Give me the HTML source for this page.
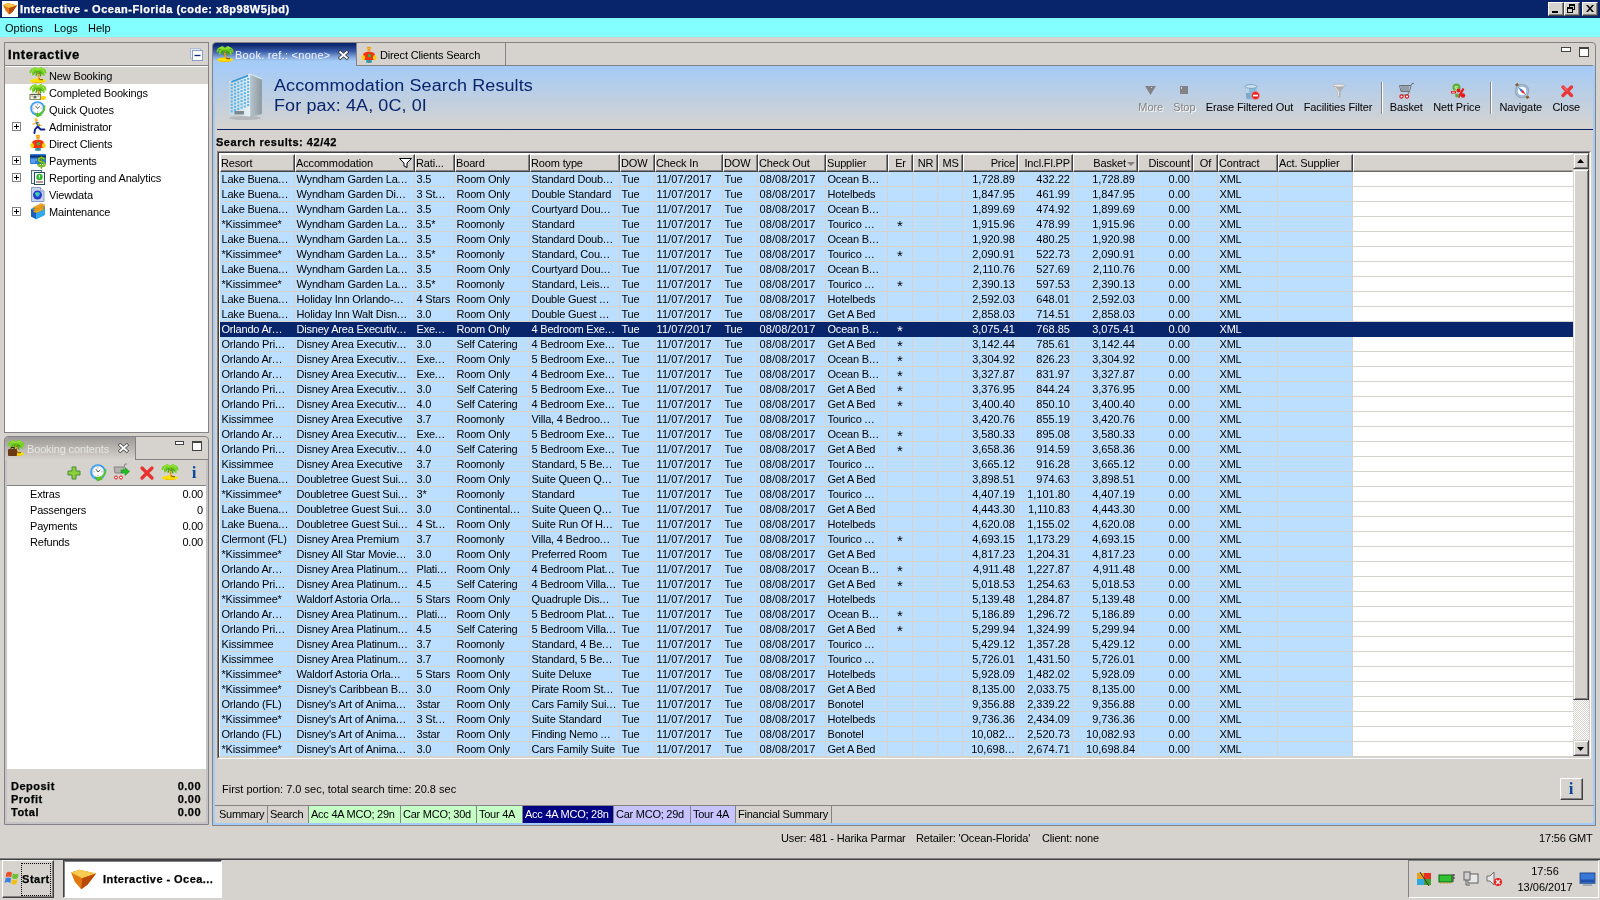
<!DOCTYPE html>
<html><head><meta charset="utf-8"><title>Interactive - Ocean-Florida</title>
<style>
*{box-sizing:border-box;margin:0;padding:0}
html,body{width:1600px;height:900px;overflow:hidden;background:#d6d3ce;font-family:"Liberation Sans",sans-serif;font-size:11px;color:#000;line-height:13px}
div,span,i,b{position:absolute;white-space:nowrap;font-style:normal}
svg{position:absolute;overflow:visible}
b{font-weight:bold}
#wrap{left:0;top:0;width:1600px;height:900px;will-change:transform}
/* title */
#title{left:0;top:0;width:1600px;height:18px;background:#08246b}
#title .cap{-webkit-text-stroke:.25px #fff;left:20px;top:3px;color:#fff;font-weight:bold;font-size:11px;line-height:13px;letter-spacing:0.52px}
.wbtn{top:2px;width:16px;height:14px;background:#d6d3ce;border:1px solid;border-color:#fff #424142 #424142 #fff;box-shadow:inset -1px -1px 0 #848284}
#menu{left:0;top:18px;width:1600px;height:19px;background:#84ffff}
#menu span{top:4px}
/* left top panel */
#nav{left:4px;top:42px;width:205px;height:391px;border:1px solid #848284;background:#fff}
#navhead{left:0;top:0;width:203px;height:23px;background:#d6d3ce;border-bottom:1px solid #848284}
#navhead b{-webkit-text-stroke:.3px #000;left:3px;top:3px;font-size:13px;line-height:17px;letter-spacing:0.62px}
.ti{left:0;width:203px;height:17px}
.ti span{left:44px;top:3px;letter-spacing:-0.15px}
.ti.on{background:#d6d3ce}
.plus{left:7px;top:4px;width:9px;height:9px;border:1px solid #848284;background:#fff}
.plus:before{content:"";position:absolute;left:1px;top:3px;width:5px;height:1px;background:#000}
.plus:after{content:"";position:absolute;left:3px;top:1px;width:1px;height:5px;background:#000}
/* booking contents */
#bc{left:4px;top:436px;width:205px;height:389px;border:1px solid #848284;border-radius:4px 4px 0 0;background:#d6d3ce}
#bctab{left:0;top:0;width:131px;height:23px;background:linear-gradient(#9c9a98,#b4b1ac 40%,#d6d3ce);border-right:1px solid #848284;border-radius:3px 0 0 0}
#bctab span{left:22px;top:6px;color:#e8e6e0;letter-spacing:-0.15px}
#bcin{left:0;top:23px;width:203px;height:364px;border:2px solid #c6c3c6;border-top:0}
#bcline{left:131px;top:22px;width:72px;height:1px;background:#848284}
#bclist{left:2px;top:48px;width:199px;height:284px;background:#fff;border-top:1px solid #848284}
#bclist span{top:0;letter-spacing:-0.2px}
.tot b{left:7px}
.tot i{right:7px;font-weight:bold}
/* main panel */
#main{left:212px;top:42px;width:1384px;height:784px;border:1px solid #848284;border-radius:4px 4px 0 0;background:#d6d3ce}
#mainin{left:0;top:22px;width:1382px;height:760px;border:2px solid #a5cbf7;border-top:0}
#tabline{left:144px;top:22px;width:1238px;height:1px;background:#848284}
#tab1{left:0;top:0;width:144px;height:24px;border-radius:3px 0 0 0;background:linear-gradient(#08246b,#0c2870 8%,#3a5ca8 35%,#86a8dc 60%,#a5cbf7 76%,#a5cbf7);border-right:1px solid #848284}
#tab1 span{left:22px;top:6px;color:#f0f4ff;letter-spacing:0.28px}
#tab2{left:144px;top:0;width:149px;height:23px;border-right:1px solid #848284}
#tab2 span{left:23px;top:6px;letter-spacing:-0.15px}
#hdr{left:2px;top:23px;width:1378px;height:63px;background:linear-gradient(#a5cbf7,#d6d3ce)}
#hdrline{left:4px;top:86px;width:1376px;height:1px;background:#08246b}
#hdr .t1{left:59px;top:9px;font-size:18px;line-height:20px;color:#08246b;letter-spacing:0.1px;transform:scaleY(.88);transform-origin:0 16.200px}
#hdr .t2{left:59px;top:29px;font-size:18px;line-height:20px;color:#08246b;letter-spacing:0.1px;transform:scaleY(.88);transform-origin:0 16.200px}
.tb{top:35px;height:13px;text-align:center;letter-spacing:-0.1px}
.tb.dis{color:#848284;text-shadow:1px 1px 0 #fff}
.sep{top:17px;width:2px;height:32px;border-left:1px solid #848284;border-right:1px solid #fff}
#sr{-webkit-text-stroke:.25px #000;left:3px;top:93px;font-weight:bold;font-size:11px;line-height:13px;letter-spacing:0.52px}
/* table */
#tblwrap{width:1374px;height:608px;border:1px solid;border-color:#848284 #fff #fff #848284}
#tblwrap2{width:1372px;height:606px;border:1px solid;border-color:#424142 #d6d3ce #d6d3ce #424142}
#tbl{left:6px;top:110px;width:1370px;height:603px;background:#fff;overflow:hidden}
#tcont{left:1px;top:1px;width:1353px;height:602px}
#thead{left:0;top:0;width:1353px;height:18px;background:#d6d3ce}
.th{top:0;height:18px;background:#d6d3ce;border:1px solid;border-color:#fff #424142 #424142 #fff;box-shadow:inset -1px -1px 0 #848284}
.th.fill{border-color:#fff #d6d3ce #6b6963 #fff;box-shadow:inset 0 -1px 0 #a5a29c}
.th span{top:2px;left:0px;letter-spacing:-0.15px}
.th.r span{left:auto;right:2px}
.th.c span{left:0;right:0;text-align:center}
#tbody{left:0;top:18px;width:1353px;height:585px;
 background:repeating-linear-gradient(to bottom,transparent 0,transparent 14px,#d6d3ce 14px,#d6d3ce 15px)}
.tr{left:0;width:1353px;height:15px}
.td{top:0;height:14px;line-height:15px;background:#bddfff;padding-left:1.500px;overflow:hidden;border-right:1px solid #d6d3ce;box-sizing:border-box}
.td u{text-decoration:none;letter-spacing:0.35px}
.td.l,.td.c{letter-spacing:-0.2px}
.td.d{letter-spacing:0.1px}
.td.er{text-align:center;padding-left:0;font-size:15px;line-height:17px}
.td.r{text-align:right;padding-right:2px;padding-left:0}
.td.c{text-align:center;padding-left:0}
.tr.sel{background:#08246b}
.tr.sel .td{background:#08246b;color:#fff;border-right-color:#08246b;height:15px}
.sortarr{right:2px;top:7px;width:0;height:0;border-left:4px solid transparent;border-right:4px solid transparent;border-top:4px solid #848284}
/* scrollbar */
#vs{left:1354px;top:0;width:16px;height:603px;background-image:conic-gradient(#fff 25%,#d6d3ce 0 50%,#fff 0 75%,#d6d3ce 0);background-size:2px 2px}
.sbtn{left:0;width:16px;height:16px;background:#d6d3ce;border:1px solid;border-color:#d6d3ce #424142 #424142 #d6d3ce;box-shadow:inset 1px 1px 0 #fff,inset -1px -1px 0 #848284}
/* bottom */
#fp{left:9px;top:740px}
#ibtn{left:1347px;top:735px;width:23px;height:22px;background:#d6d3ce;border:1px solid;border-color:#fff #424142 #424142 #fff;box-shadow:inset -1px -1px 0 #848284}
#ibtn b{left:0;width:20px;top:1px;text-align:center;font-family:"Liberation Serif",serif;font-size:17px;line-height:17px;color:#0a4a9a}
#btabs{left:2px;top:762px;width:1379px;height:19px;border-top:1px solid #848284}
.bt{top:0;height:17px;line-height:17px;padding-left:2px;border-right:1px solid #848284;letter-spacing:-0.25px}
#status span{top:832px;letter-spacing:-0.15px}
#tbline{left:0;top:858px;width:1600px;height:2px;border-top:1px solid #848284;border-bottom:1px solid #424142}

</style></head>
<body>
<div id="wrap">
<div id="title">
<svg style="left:2px;top:1px" width="16" height="16" viewBox="0 0 16 16"><rect width="16" height="16" fill="#fff"/><path d="M1 4l5-2 9 2.5-4.500 6.500-3.500 2.500-3.500-4z" fill="#e07a10"/><path d="M1 4l5-2 9 2.500-8 2.500z" fill="#f6c24a"/><path d="M7 7l8-2.500-4.500 6.500-3.500 2.500z" fill="#b84a08"/></svg>
<span class="cap">Interactive - Ocean-Florida (code: x8p98W5jbd)</span>
<div class="wbtn" style="left:1548px"><i style="left:3px;top:8px;width:6px;height:2px;background:#000"></i></div>
<div class="wbtn" style="left:1564px"><i style="left:4px;top:1px;width:6px;height:6px;border:1px solid #000;border-top-width:2px"></i><i style="left:2px;top:4px;width:6px;height:6px;border:1px solid #000;border-top-width:2px;background:#d6d3ce"></i></div>
<div class="wbtn" style="left:1582px"><svg style="left:3px;top:2px" width="8" height="7" viewBox="0 0 8 7"><path d="M0 0h2l2 2.500 2-2.500h2l-3 3.500 3 3.500h-2l-2-2.500-2 2.500h-2l3-3.500z" fill="#000"/></svg></div>
</div>
<div id="menu"><span style="left:5px">Options</span><span style="left:54px">Logs</span><span style="left:88px">Help</span></div>
<div id="nav">
<div id="navhead"><b>Interactive</b><svg style="left:185px;top:5px" width="14" height="14" viewBox="0 0 14 14"><rect x=".5" y=".5" width="10" height="10" fill="#e4ecf8" stroke="#b0bcd4"/><rect x="2.500" y="2.500" width="10" height="10" fill="#fff" stroke="#8a9cc0"/><path d="M4.500 7.500h6" stroke="#0a2a80" stroke-width="1.300"/></svg></div>
<div class="ti on" style="top:24px"><svg style="left:25px;top:0px" width="16" height="16" viewBox="0 0 16 16"><path d="M0 13.800c0-1.300 3.500-2.300 8-2.300s8 1 8 2.300-3.500 2.200-8 2.200-8-.9-8-2.200z" fill="#ffe000"/><path d="M1 14.500c2 1 5 1.500 7 1.500s5-.5 7-1.500c-2 .5-5 .7-7 .7s-5-.2-7-.7z" fill="#f0b800"/><path d="M7.200 4c0 3 .3 6 1.200 9h1.900c-1.200-3-1.700-6-1.500-9z" fill="#f4b010"/><path d="M8 6l1 .8M8.200 8.500l1 .8M8.700 11l1 .6" stroke="#b85a10" stroke-width="1"/><path d="M9.500 12.200h3.500v1h-3.500z" fill="#6a4210"/><g fill="none" stroke-linecap="round"><path d="M8 3.500Q6.500 5 6.200 8M8 3.500Q10 5 10.600 8.600M8 3.500Q11.500 4 12.300 6.800M8 3.500Q4.500 4 3.900 6.600" stroke="#48a814" stroke-width="1.700"/><path d="M8 3.500Q4.500 .2 1.200 3.200L.4 5.400M8 3.500Q4.500 2.500 2.800 5.200L2.900 7.700M8 3.500Q11.500 .2 14.800 3.200L15.600 5.600M8 3.500Q11.500 2.500 13.400 5.200L13.800 8.200M8 3.500Q7 1 4.800 .8M8 3.500Q9 1 11.200 .8" stroke="#74d21c" stroke-width="1.800"/><path d="M7 2.200Q5 1 3 2M9 2.200Q11 1 13 2" stroke="#a8f040" stroke-width=".9"/></g></svg><span>New Booking</span></div>
<div class="ti" style="top:41px"><svg style="left:25px;top:0px" width="16" height="16" viewBox="0 0 16 16"><path d="M10 13.800c0-1 1.500-1.800 3.500-1.800s2.500.8 2.500 1.800-1 2.200-3 2.200-3-1.200-3-2.200z" fill="#ffd000"/><path d="M7.200 4c0 2.500 .3 4.500 1 7h1.900c-1-2.500-1.500-4.500-1.300-7z" fill="#f4b010"/><path d="M8 6l1 .8M8.200 8.500l1 .8" stroke="#b85a10" stroke-width="1"/><g fill="none" stroke-linecap="round"><path d="M8 3.500Q6.500 5 6.200 8M8 3.500Q10 5 10.600 8.600M8 3.500Q11.500 4 12.300 6.800M8 3.500Q4.500 4 3.900 6.600" stroke="#48a814" stroke-width="1.700"/><path d="M8 3.500Q4.500 .2 1.200 3.200L.4 5.400M8 3.500Q4.500 2.500 2.800 5.200L2.900 7.700M8 3.500Q11.500 .2 14.800 3.200L15.600 5.600M8 3.500Q11.500 2.500 13.400 5.200L13.800 8.200M8 3.500Q7 1 4.800 .8M8 3.500Q9 1 11.200 .8" stroke="#74d21c" stroke-width="1.800"/><path d="M7 2.200Q5 1 3 2M9 2.200Q11 1 13 2" stroke="#a8f040" stroke-width=".9"/></g><path d="M0 10.500h10.500v5h-10.500z" fill="#f4f4e0" stroke="#8a8c68" stroke-width="1.200"/><path d="M.5 10.300h10.500" stroke="#5a5c40" stroke-width="1"/><circle cx="5" cy="13" r="1.600" fill="#6a6a5a"/><path d="M1.500 12h1.500M7.500 12h1.500" stroke="#7a7c60" stroke-width=".8"/></svg><span>Completed Bookings</span></div>
<div class="ti" style="top:58px"><svg style="left:25px;top:0px" width="16" height="16" viewBox="0 0 16 16"><circle cx="7.500" cy="7.500" r="7.300" fill="#2e9af4"/><circle cx="7.500" cy="7.500" r="6" fill="#6ec0ff"/><circle cx="7.500" cy="7.300" r="5.200" fill="#fff" stroke="#c8ccd4" stroke-width=".7"/><path d="M7.500 3.200v.9M7.500 10.600v.9M3.300 7.300h.9M10.800 7.300h.9" stroke="#666" stroke-width=".8"/><path d="M5.500 4.800l2 2.700 2.300-2" stroke="#444" stroke-width=".9" fill="none"/><path d="M15.200 4.500c.8 3.500-.8 7-4 8.300l.5 1.400-4.700 1.800-2-4.300 1.600.7c.5-.5 1.500-.3 2.800-.5 3-.7 4.800-3.600 4.500-7.400z" fill="#58c624"/><path d="M5 11.700l2 4.300 4.700-1.800" fill="none" stroke="#3c9c14" stroke-width=".5"/></svg><span>Quick Quotes</span></div>
<div class="ti" style="top:75px"><i class="plus"></i><svg style="left:25px;top:0px" width="16" height="16" viewBox="0 0 16 16"><circle cx="6.300" cy="2.200" r="1.600" fill="#f6c040"/><path d="M4.600 1.200l2.200-.7" stroke="#f0d020" stroke-width="1.300"/><path d="M5.300 3.800l3.200.3 1.800 3.600-2.500 1.800z" fill="#3c54b0"/><path d="M6.500 4.500l2 .5 1.200 2.800-1.500.8z" fill="#6aa838"/><path d="M8 5l1.300 2.500" stroke="#f6c040" stroke-width="1.200"/><path d="M5.500 5.500l-2.600.7M9.800 7l1.600.5" stroke="#f6b030" stroke-width="1.200" stroke-linecap="round"/><path d="M8.200 9.200l2.600 2.300h3.600M7.300 8.800l-2.300 2.700-.6 3.500" stroke="#14208c" stroke-width="1.900" fill="none" stroke-linecap="round" stroke-linejoin="round"/></svg><span>Administrator</span></div>
<div class="ti" style="top:92px"><svg style="left:25px;top:0px" width="16" height="16" viewBox="0 0 16 16"><circle cx="8" cy="2.600" r="2.100" fill="#f8c050"/><path d="M6 1.300c1-1.300 3-1.300 4 0" stroke="#f0a000" stroke-width="1.300" fill="none"/><path d="M7 2.800h2" stroke="#c05010" stroke-width=".6"/><path d="M2.500 6.500c2-2.500 9-2.500 11 0l1 3.500-1.500 3h-10l-1.500-3z" fill="#f03414"/><ellipse cx="2.200" cy="10.500" rx="1.900" ry="2.600" fill="#ffd010"/><ellipse cx="13.800" cy="10.500" rx="1.900" ry="2.600" fill="#ffd010"/><path d="M4 9l1.500 1.500v2.500h5v-2.500l1.500-1.500v-3h-8z" fill="#f03414"/><rect x="7" y="7.200" width="2.800" height="3" fill="#30b848"/><rect x="5.200" y="13" width="5.600" height="2.800" fill="#18a8b8"/><path d="M8 13v2.800" stroke="#f03414" stroke-width=".7"/></svg><span>Direct Clients</span></div>
<div class="ti" style="top:109px"><i class="plus"></i><svg style="left:25px;top:0px" width="16" height="16" viewBox="0 0 16 16"><rect x="0" y="2" width="16" height="10" rx="1" fill="#2a7ad8"/><rect x="0" y="3.500" width="16" height="2" fill="#0a2a70"/><path d="M1 8l6 0M1 10l4 0" stroke="#8cc0f8" stroke-width="1"/><text x="11.500" y="15" font-family="Liberation Sans" font-weight="bold" font-size="15" text-anchor="middle" fill="#9ad820" stroke="#4a8a08" stroke-width=".5">$</text></svg><span>Payments</span></div>
<div class="ti" style="top:126px"><i class="plus"></i><svg style="left:25px;top:0px" width="16" height="16" viewBox="0 0 16 16"><rect x="1.500" y="1.500" width="10" height="13" fill="#e8eef4" stroke="#4a6a80"/><rect x="4.500" y="3.500" width="10" height="12" fill="#fff" stroke="#2a4a60"/><circle cx="9.500" cy="8" r="3.200" fill="#2ab82a"/><path d="M9.500 6v2.500M9.500 9.800v.1" stroke="#fff" stroke-width="1.200"/><path d="M6 13h7" stroke="#603020" stroke-width="1"/></svg><span>Reporting and Analytics</span></div>
<div class="ti" style="top:143px"><svg style="left:25px;top:0px" width="16" height="16" viewBox="0 0 16 16"><path d="M1.500 1.500h9l3.500 3.500v10.500h-12.500z" fill="#c8d4f0" stroke="#8a9cc8"/><path d="M10.500 1.500v3.500h3.500" fill="#eef2fc" stroke="#8a9cc8"/><circle cx="7.500" cy="9" r="4.500" fill="#2a3ac8"/><path d="M5 7c1.500-1.500 3.500-1.500 5 0 0 2-1 3-2.500 4-1.500-1-2.500-2-2.500-4z" fill="#30c0d8"/><path d="M6 6.500c1 0 2 .5 2 1.500s-1 1.500-2 1z" fill="#50d870"/></svg><span>Viewdata</span></div>
<div class="ti" style="top:160px"><i class="plus"></i><svg style="left:25px;top:0px" width="16" height="16" viewBox="0 0 16 16"><path d="M1 6l9-4.500 5 2v8l-9 4.500-5-2.500z" fill="#2a90e0"/><path d="M1 6l5 2.500v7.500l-5-2.500z" fill="#1a60b8"/><path d="M3 4.500l8-4 4 1.500-8 4zM3 6.500l8-4 4 1.500-8 4zM3 8.500l8-4 4 1.500-8 4z" fill="#f4b020" stroke="#c07010" stroke-width=".4"/><path d="M6 10.500l9-4.500v6l-9 4.500z" fill="#30a8f0"/></svg><span>Maintenance</span></div>
</div>
<div id="bc">
<div id="bctab"><svg style="left:3px;top:3px" width="16" height="16" viewBox="0 0 16 16"><path d="M0 13.800c0-1.300 3.500-2.300 8-2.300s8 1 8 2.300-3.500 2.200-8 2.200-8-.9-8-2.200z" fill="#ffe000"/><path d="M1 14.500c2 1 5 1.500 7 1.500s5-.5 7-1.500c-2 .5-5 .7-7 .7s-5-.2-7-.7z" fill="#f0b800"/><path d="M7.200 4c0 3 .3 6 1.200 9h1.900c-1.200-3-1.700-6-1.500-9z" fill="#f4b010"/><path d="M8 6l1 .8M8.200 8.500l1 .8M8.700 11l1 .6" stroke="#b85a10" stroke-width="1"/><path d="M9.500 12.200h3.500v1h-3.500z" fill="#6a4210"/><g fill="none" stroke-linecap="round"><path d="M8 3.500Q6.500 5 6.200 8M8 3.500Q10 5 10.600 8.600M8 3.500Q11.500 4 12.300 6.800M8 3.500Q4.500 4 3.900 6.600" stroke="#48a814" stroke-width="1.700"/><path d="M8 3.500Q4.500 .2 1.200 3.200L.4 5.400M8 3.500Q4.500 2.500 2.800 5.200L2.900 7.700M8 3.500Q11.500 .2 14.800 3.200L15.600 5.600M8 3.500Q11.500 2.500 13.400 5.200L13.800 8.200M8 3.500Q7 1 4.800 .8M8 3.500Q9 1 11.200 .8" stroke="#74d21c" stroke-width="1.800"/><path d="M7 2.200Q5 1 3 2M9 2.200Q11 1 13 2" stroke="#a8f040" stroke-width=".9"/></g></svg><svg style="left:3px;top:9px" width="10" height="10" viewBox="0 0 10 10"><rect x="0" y="3" width="9" height="7" rx="1" fill="#6a3a18"/><path d="M3 3v-1.500h3v1.500" stroke="#3a2008" fill="none"/></svg><span>Booking contents</span><svg style="left:113px;top:6px" width="11" height="10" viewBox="0 0 11 10"><path d="M1 1l9 8M10 1l-9 8" stroke="#444" stroke-width="3.400"/><path d="M1.500 1.500l8 7M9.500 1.500l-8 7" stroke="#fff" stroke-width="1.800"/></svg></div>
<div id="bcin"></div><div id="bcline"></div>
<i style="left:170px;top:4px;width:9px;height:4px;border:1px solid #444;background:#fff"></i><i style="left:187px;top:4px;width:10px;height:10px;border:1px solid #444;border-top-width:2px;background:#fff"></i>
<svg style="left:62px;top:29px" width="14" height="14" viewBox="0 0 14 14"><path d="M5 1h4v4h4v4h-4v4h-4v-4h-4v-4h4z" fill="#8ccf3a" stroke="#4a8a3a" stroke-width="1"/></svg><svg style="left:85px;top:27px" width="17" height="17" viewBox="0 0 16 16"><circle cx="7.500" cy="7.500" r="7.300" fill="#2e9af4"/><circle cx="7.500" cy="7.500" r="6" fill="#6ec0ff"/><circle cx="7.500" cy="7.300" r="5.200" fill="#fff" stroke="#c8ccd4" stroke-width=".7"/><path d="M7.500 3.200v.9M7.500 10.600v.9M3.300 7.300h.9M10.800 7.300h.9" stroke="#666" stroke-width=".8"/><path d="M5.500 4.800l2 2.700 2.300-2" stroke="#444" stroke-width=".9" fill="none"/><path d="M15.200 4.500c.8 3.500-.8 7-4 8.300l.5 1.400-4.700 1.800-2-4.300 1.600.7c.5-.5 1.500-.3 2.800-.5 3-.7 4.800-3.600 4.500-7.400z" fill="#58c624"/><path d="M5 11.700l2 4.300 4.700-1.800" fill="none" stroke="#3c9c14" stroke-width=".5"/></svg><svg style="left:108px;top:26px" width="18" height="18" viewBox="0 0 18 18"><path d="M1 4h10l-1 6h-8zM11 4l1-3h2" fill="none" stroke="#848284" stroke-width="1"/><path d="M3 4v6M5 4v6M7 4v6M9 4v6" stroke="#848284" stroke-width=".8"/><circle cx="3" cy="14.500" r="1.500" fill="#fff" stroke="#e01010"/><circle cx="8" cy="14.500" r="1.500" fill="#fff" stroke="#e01010"/><path d="M8 7h4v-2.500l4.500 4-4.500 4v-2.500h-4z" fill="#20c020" stroke="#108010" stroke-width=".5"/></svg><svg style="left:135px;top:29px" width="14" height="14" viewBox="0 0 14 14"><path d="M2 2l10 10M12 2l-10 10" stroke="#e83030" stroke-width="3.200" stroke-linecap="round"/></svg><svg style="left:157px;top:27px" width="16" height="16" viewBox="0 0 16 16"><path d="M0 13.800c0-1.300 3.500-2.300 8-2.300s8 1 8 2.300-3.500 2.200-8 2.200-8-.9-8-2.200z" fill="#ffe000"/><path d="M1 14.500c2 1 5 1.500 7 1.500s5-.5 7-1.500c-2 .5-5 .7-7 .7s-5-.2-7-.7z" fill="#f0b800"/><path d="M7.200 4c0 3 .3 6 1.200 9h1.900c-1.200-3-1.700-6-1.500-9z" fill="#f4b010"/><path d="M8 6l1 .8M8.200 8.500l1 .8M8.700 11l1 .6" stroke="#b85a10" stroke-width="1"/><path d="M9.500 12.200h3.500v1h-3.500z" fill="#6a4210"/><g fill="none" stroke-linecap="round"><path d="M8 3.500Q6.500 5 6.200 8M8 3.500Q10 5 10.600 8.600M8 3.500Q11.500 4 12.300 6.800M8 3.500Q4.500 4 3.900 6.600" stroke="#48a814" stroke-width="1.700"/><path d="M8 3.500Q4.500 .2 1.200 3.200L.4 5.400M8 3.500Q4.500 2.500 2.800 5.200L2.900 7.700M8 3.500Q11.500 .2 14.800 3.200L15.600 5.600M8 3.500Q11.500 2.500 13.400 5.200L13.800 8.200M8 3.500Q7 1 4.800 .8M8 3.500Q9 1 11.200 .8" stroke="#74d21c" stroke-width="1.800"/><path d="M7 2.200Q5 1 3 2M9 2.200Q11 1 13 2" stroke="#a8f040" stroke-width=".9"/></g></svg><b style="left:184px;top:26px;width:10px;text-align:center;font-family:'Liberation Serif',serif;font-size:17px;line-height:19px;color:#0a4aa0">i</b>
<div id="bclist"><span style="left:23px;top:2px">Extras</span><span style="right:3px;top:2px">0.00</span><span style="left:23px;top:18px">Passengers</span><span style="right:3px;top:18px">0</span><span style="left:23px;top:34px">Payments</span><span style="right:3px;top:34px">0.00</span><span style="left:23px;top:50px">Refunds</span><span style="right:3px;top:50px">0.00</span></div>
<b style="left:6px;top:343px;font-size:11px;letter-spacing:.5px;-webkit-text-stroke:.25px #000">Deposit</b><b style="right:7px;top:343px;font-size:11px;letter-spacing:.45px;-webkit-text-stroke:.25px #000">0.00</b><b style="left:6px;top:356px;font-size:11px;letter-spacing:.5px;-webkit-text-stroke:.25px #000">Profit</b><b style="right:7px;top:356px;font-size:11px;letter-spacing:.45px;-webkit-text-stroke:.25px #000">0.00</b><b style="left:6px;top:369px;font-size:11px;letter-spacing:.5px;-webkit-text-stroke:.25px #000">Total</b><b style="right:7px;top:369px;font-size:11px;letter-spacing:.45px;-webkit-text-stroke:.25px #000">0.00</b>
</div>
<div id="main">
<div id="tab1"><svg style="left:4px;top:3px" width="16" height="16" viewBox="0 0 16 16"><path d="M0 13.800c0-1.300 3.500-2.300 8-2.300s8 1 8 2.300-3.500 2.200-8 2.200-8-.9-8-2.200z" fill="#ffe000"/><path d="M1 14.500c2 1 5 1.500 7 1.500s5-.5 7-1.500c-2 .5-5 .7-7 .7s-5-.2-7-.7z" fill="#f0b800"/><path d="M7.200 4c0 3 .3 6 1.200 9h1.900c-1.200-3-1.700-6-1.500-9z" fill="#f4b010"/><path d="M8 6l1 .8M8.200 8.500l1 .8M8.700 11l1 .6" stroke="#b85a10" stroke-width="1"/><path d="M9.500 12.200h3.500v1h-3.500z" fill="#6a4210"/><g fill="none" stroke-linecap="round"><path d="M8 3.500Q6.500 5 6.200 8M8 3.500Q10 5 10.600 8.600M8 3.500Q11.500 4 12.300 6.800M8 3.500Q4.500 4 3.900 6.600" stroke="#48a814" stroke-width="1.700"/><path d="M8 3.500Q4.500 .2 1.200 3.200L.4 5.400M8 3.500Q4.500 2.500 2.800 5.200L2.900 7.700M8 3.500Q11.500 .2 14.800 3.200L15.600 5.600M8 3.500Q11.500 2.500 13.400 5.200L13.800 8.200M8 3.500Q7 1 4.800 .8M8 3.500Q9 1 11.200 .8" stroke="#74d21c" stroke-width="1.800"/><path d="M7 2.200Q5 1 3 2M9 2.200Q11 1 13 2" stroke="#a8f040" stroke-width=".9"/></g></svg><span>Book. ref.: &lt;none&gt;</span><svg style="left:125px;top:7px" width="11" height="10" viewBox="0 0 11 10"><path d="M1 1l9 8M10 1l-9 8" stroke="#333" stroke-width="3.400"/><path d="M1.500 1.500l8 7M9.500 1.500l-8 7" stroke="#fff" stroke-width="1.800"/></svg></div>
<div id="tab2"><svg style="left:4px;top:4px" width="16" height="16" viewBox="0 0 16 16"><circle cx="8" cy="2.600" r="2.100" fill="#f8c050"/><path d="M6 1.300c1-1.300 3-1.300 4 0" stroke="#f0a000" stroke-width="1.300" fill="none"/><path d="M7 2.800h2" stroke="#c05010" stroke-width=".6"/><path d="M2.500 6.500c2-2.500 9-2.500 11 0l1 3.500-1.500 3h-10l-1.500-3z" fill="#f03414"/><ellipse cx="2.200" cy="10.500" rx="1.900" ry="2.600" fill="#ffd010"/><ellipse cx="13.800" cy="10.500" rx="1.900" ry="2.600" fill="#ffd010"/><path d="M4 9l1.500 1.500v2.500h5v-2.500l1.500-1.500v-3h-8z" fill="#f03414"/><rect x="7" y="7.200" width="2.800" height="3" fill="#30b848"/><rect x="5.200" y="13" width="5.600" height="2.800" fill="#18a8b8"/><path d="M8 13v2.800" stroke="#f03414" stroke-width=".7"/></svg><span>Direct Clients Search</span></div>
<div id="tabline"></div>
<i style="left:1348px;top:4px;width:10px;height:5px;border:1px solid #444;background:#fff"></i><i style="left:1366px;top:4px;width:10px;height:10px;border:1px solid #444;border-top-width:2px;background:#fff"></i>
<div id="mainin"></div>
<div id="hdr">
<svg preserveAspectRatio="none" style="left:12px;top:7px" width="37" height="47" viewBox="0 0 35 47"><defs><linearGradient id="bg1" x1="0" x2="1"><stop offset="0" stop-color="#c8d8e4"/><stop offset="1" stop-color="#e8f0f4"/></linearGradient><linearGradient id="bg2" x1="0" x2="1"><stop offset="0" stop-color="#b8c4cc"/><stop offset="1" stop-color="#8c989e"/></linearGradient></defs><path d="M2 9l20-8v43l-20-3z" fill="url(#bg1)"/><path d="M22 1l11 5v35l-11 3z" fill="url(#bg2)"/><path d="M2 9l20-8 11 5" fill="none" stroke="#dfe8ee" stroke-width="1"/><rect x="3.5" y="11.0" width="2" height="2" fill="#5ab4e8"/><rect x="6.6" y="9.8" width="2" height="2" fill="#5ab4e8"/><rect x="9.7" y="8.5" width="2" height="2" fill="#5ab4e8"/><rect x="12.8" y="7.2" width="2" height="2" fill="#5ab4e8"/><rect x="15.9" y="6.0" width="2" height="2" fill="#5ab4e8"/><rect x="19.0" y="4.8" width="2" height="2" fill="#5ab4e8"/><rect x="3.5" y="14.3" width="2" height="2" fill="#5ab4e8"/><rect x="6.6" y="13.1" width="2" height="2" fill="#5ab4e8"/><rect x="9.7" y="11.8" width="2" height="2" fill="#5ab4e8"/><rect x="12.8" y="10.6" width="2" height="2" fill="#5ab4e8"/><rect x="15.9" y="9.3" width="2" height="2" fill="#5ab4e8"/><rect x="19.0" y="8.1" width="2" height="2" fill="#5ab4e8"/><rect x="3.5" y="17.6" width="2" height="2" fill="#5ab4e8"/><rect x="6.6" y="16.4" width="2" height="2" fill="#5ab4e8"/><rect x="9.7" y="15.1" width="2" height="2" fill="#5ab4e8"/><rect x="12.8" y="13.8" width="2" height="2" fill="#5ab4e8"/><rect x="15.9" y="12.6" width="2" height="2" fill="#5ab4e8"/><rect x="19.0" y="11.3" width="2" height="2" fill="#5ab4e8"/><rect x="3.5" y="20.9" width="2" height="2" fill="#5ab4e8"/><rect x="6.6" y="19.6" width="2" height="2" fill="#5ab4e8"/><rect x="9.7" y="18.4" width="2" height="2" fill="#5ab4e8"/><rect x="12.8" y="17.1" width="2" height="2" fill="#5ab4e8"/><rect x="15.9" y="15.9" width="2" height="2" fill="#5ab4e8"/><rect x="19.0" y="14.6" width="2" height="2" fill="#5ab4e8"/><rect x="3.5" y="24.2" width="2" height="2" fill="#5ab4e8"/><rect x="6.6" y="22.9" width="2" height="2" fill="#5ab4e8"/><rect x="9.7" y="21.7" width="2" height="2" fill="#5ab4e8"/><rect x="12.8" y="20.4" width="2" height="2" fill="#5ab4e8"/><rect x="15.9" y="19.2" width="2" height="2" fill="#5ab4e8"/><rect x="19.0" y="17.9" width="2" height="2" fill="#5ab4e8"/><rect x="3.5" y="27.5" width="2" height="2" fill="#5ab4e8"/><rect x="6.6" y="26.2" width="2" height="2" fill="#5ab4e8"/><rect x="9.7" y="25.0" width="2" height="2" fill="#5ab4e8"/><rect x="12.8" y="23.8" width="2" height="2" fill="#5ab4e8"/><rect x="15.9" y="22.5" width="2" height="2" fill="#5ab4e8"/><rect x="19.0" y="21.2" width="2" height="2" fill="#5ab4e8"/><rect x="3.5" y="30.8" width="2" height="2" fill="#5ab4e8"/><rect x="6.6" y="29.5" width="2" height="2" fill="#5ab4e8"/><rect x="9.7" y="28.3" width="2" height="2" fill="#5ab4e8"/><rect x="12.8" y="27.0" width="2" height="2" fill="#5ab4e8"/><rect x="15.9" y="25.8" width="2" height="2" fill="#5ab4e8"/><rect x="19.0" y="24.5" width="2" height="2" fill="#5ab4e8"/><rect x="3.5" y="34.1" width="2" height="2" fill="#5ab4e8"/><rect x="6.6" y="32.8" width="2" height="2" fill="#5ab4e8"/><rect x="9.7" y="31.6" width="2" height="2" fill="#5ab4e8"/><rect x="12.8" y="30.3" width="2" height="2" fill="#5ab4e8"/><rect x="15.9" y="29.1" width="2" height="2" fill="#5ab4e8"/><rect x="19.0" y="27.8" width="2" height="2" fill="#5ab4e8"/><rect x="3.5" y="37.4" width="2" height="2" fill="#5ab4e8"/><rect x="6.6" y="36.1" width="2" height="2" fill="#5ab4e8"/><rect x="9.7" y="34.9" width="2" height="2" fill="#5ab4e8"/><rect x="12.8" y="33.6" width="2" height="2" fill="#5ab4e8"/><rect x="15.9" y="32.4" width="2" height="2" fill="#5ab4e8"/><rect x="19.0" y="31.1" width="2" height="2" fill="#5ab4e8"/><path d="M4 8l16-6.500v2l-16 6.500z" fill="#3a9ad8"/><rect x="7" y="38" width="9" height="3.500" fill="#7a8890"/><ellipse cx="17" cy="45" rx="15" ry="2" fill="#000" opacity=".12"/></svg><span class="t1">Accommodation Search Results</span><span class="t2">For pax: 4A, 0C, 0I</span>
</div>
<div id="hdrline"></div>
<span class="tb dis" style="left:877.7px;width:120px;top:58px">More</span><span class="tb dis" style="left:911.3px;width:120px;top:58px">Stop</span><span class="tb" style="left:976.5px;width:120px;top:58px">Erase Filtered Out</span><span class="tb" style="left:1065px;width:120px;top:58px">Facilities Filter</span><span class="tb" style="left:1133.3px;width:120px;top:58px">Basket</span><span class="tb" style="left:1183.8px;width:120px;top:58px">Nett Price</span><span class="tb" style="left:1247.8px;width:120px;top:58px">Navigate</span><span class="tb" style="left:1293.3px;width:120px;top:58px">Close</span>
<svg style="left:932px;top:43px" width="11" height="9" viewBox="0 0 11 9"><path d="M0 0h11l-5.500 9z" fill="#848284"/><rect x="6" y="1" width="1" height="1" fill="#d6d3ce"/></svg><svg style="left:967px;top:43px" width="8" height="8" viewBox="0 0 8 8"><rect width="8" height="8" fill="#848284"/><rect x="1" y="1" width="1" height="2" fill="#d6d3ce"/></svg><svg style="left:1031px;top:41px" width="16" height="16" viewBox="0 0 16 16"><path d="M1 2.500l1.500 12c2 1.200 7 1.200 9 0l1.500-12z" fill="#8ab8d8"/><path d="M1 2.500l1 8h3v-8z" fill="#b8d4e8"/><ellipse cx="7" cy="2.500" rx="6" ry="1.800" fill="#d0e4f0" stroke="#6a98b8" stroke-width=".8"/><path d="M1.800 9h4v5.500h-3.300z" fill="#7aa8c8"/><circle cx="11.500" cy="11.500" r="4" fill="#e82020" stroke="#f8a0a0" stroke-width=".6"/><rect x="9" y="10.700" width="5" height="1.700" fill="#fff"/></svg><svg style="left:1120px;top:41px" width="12" height="14" viewBox="0 0 12 14"><path d="M0 1.500c2-1.500 10-1.500 12 0l-4.500 6v5l-1.500 1.500-1.500-1.500v-5z" fill="#b0b0b0"/><ellipse cx="6" cy="1.500" rx="6" ry="1.400" fill="#e8e8e8" stroke="#a0a0a0" stroke-width=".5"/><path d="M2 3l3.500 4.500v5" stroke="#e8e8e8" stroke-width="1" fill="none"/></svg><i class="sep" style="left:1168px;top:39px"></i><i class="sep" style="left:1277px;top:39px"></i>
<svg style="left:1186px;top:40px" width="16" height="16" viewBox="0 0 16 16"><path d="M.5 2.500h11.500l-1.500 6h-8.500zM12 2.500l1-2h2" fill="none" stroke="#707070" stroke-width="1"/><path d="M3 2.500v6M5 2.500v6M7 2.500v6M9 2.500v6" stroke="#707070" stroke-width="1"/><path d="M10.500 8.500l-2 3.500h-6" fill="none" stroke="#707070" stroke-width="1"/><circle cx="2.500" cy="13.500" r="1.600" fill="#fff" stroke="#e01010" stroke-width="1.100"/><circle cx="8" cy="13.500" r="1.600" fill="#fff" stroke="#e01010" stroke-width="1.100"/></svg><svg style="left:1237px;top:40px" width="16" height="16" viewBox="0 0 16 16"><circle cx="6.500" cy="4.500" r="4" fill="#58b038"/><text x="6.500" y="7.500" font-size="8" font-weight="bold" text-anchor="middle" fill="#c8f0a0" font-family="Liberation Sans">$</text><path d="M1 8h5v2.500h-5z" fill="#e81818"/><path d="M2 9.200h3" stroke="#fff" stroke-width=".8"/><circle cx="8.500" cy="7.500" r="2" fill="#e81818"/><circle cx="13" cy="12.500" r="2.200" fill="#e81818"/><path d="M13.500 5.500l-5 9" stroke="#e81818" stroke-width="2.200"/><circle cx="7" cy="12.500" r="2" fill="#58b038"/></svg><svg style="left:1301px;top:39.5px" width="16" height="16" viewBox="0 0 16 16"><circle cx="8" cy="8" r="6.500" fill="#e8f0f8" stroke="#9aa8b8" stroke-width="1.600"/><circle cx="8" cy="8" r="5" fill="#fff" stroke="#4a90d8" stroke-width=".8"/><path d="M4.500 4.500l2.500 4.500 2-2z" fill="#2a6ad0"/><path d="M11.500 11.500l-2.500-4.500-2 2z" fill="#e02020"/><path d="M1 1.500l2.500-1.500 1.500 2-2.500 1.500zM11.500 14l2.500-1.500 1.500 2-2.500 1.500z" fill="#8a5a2a"/></svg><svg style="left:1348px;top:42px" width="13" height="13" viewBox="0 0 13 13"><path d="M2 2l8.500 8.500M10.500 2l-8.500 8.500" stroke="#e83838" stroke-width="3.400" stroke-linecap="round"/><path d="M2.500 2l3.500 3.500" stroke="#f88" stroke-width="1" stroke-linecap="round"/></svg>
<span id="sr">Search results: 42/42</span>
<div id="tblwrap" style="left:4px;top:108px"></div><div id="tblwrap2" style="left:5px;top:109px"></div>
<div id="tbl">
<div id="tcont">
<div id="thead">
<div class="th l" style="left:0px;width:75px"><span>Resort</span></div>
<div class="th l" style="left:75px;width:120px"><span>Accommodation</span><svg style="right:2px;top:3px" width="13" height="10" viewBox="0 0 13 10"><path d="M0.5 0.500h12l-4.500 4.500v4.500l-3-1.500v-3z" fill="#fff" stroke="#000" stroke-width="1"/></svg></div>
<div class="th l" style="left:195px;width:40px"><span>Rati...</span></div>
<div class="th l" style="left:235px;width:75px"><span>Board</span></div>
<div class="th l" style="left:310px;width:90px"><span>Room type</span></div>
<div class="th l" style="left:400px;width:35px"><span>DOW</span></div>
<div class="th l" style="left:435px;width:68px"><span>Check In</span></div>
<div class="th l" style="left:503px;width:35px"><span>DOW</span></div>
<div class="th l" style="left:538px;width:68px"><span>Check Out</span></div>
<div class="th l" style="left:606px;width:62px"><span>Supplier</span></div>
<div class="th c" style="left:668px;width:25px"><span>Er</span></div>
<div class="th c" style="left:693px;width:25px"><span>NR</span></div>
<div class="th c" style="left:718px;width:25px"><span>MS</span></div>
<div class="th r" style="left:743px;width:55px"><span>Price</span></div>
<div class="th r" style="left:798px;width:55px"><span>Incl.Fl.PP</span></div>
<div class="th r" style="left:853px;width:65px"><span style="right:11px">Basket</span><i class="sortarr"></i></div>
<div class="th r" style="left:918px;width:55px"><span>Discount</span></div>
<div class="th c" style="left:973px;width:25px"><span>Of</span></div>
<div class="th l" style="left:998px;width:60px"><span>Contract</span></div>
<div class="th l" style="left:1058px;width:75px"><span>Act. Supplier</span></div>
<div class="th fill" style="left:1133px;width:220px"></div>
</div>
<div id="tbody">
<div class="tr" style="top:0px"><div class="td l" style="left:0px;width:75px">Lake Buena<u>...</u></div><div class="td l" style="left:75px;width:120px">Wyndham Garden La<u>...</u></div><div class="td l" style="left:195px;width:40px">3.5</div><div class="td l" style="left:235px;width:75px">Room Only</div><div class="td l" style="left:310px;width:90px">Standard Doub<u>...</u></div><div class="td l" style="left:400px;width:35px">Tue</div><div class="td d" style="left:435px;width:68px">11/07/2017</div><div class="td l" style="left:503px;width:35px">Tue</div><div class="td d" style="left:538px;width:68px">08/08/2017</div><div class="td l" style="left:606px;width:62px">Ocean B<u>...</u></div><div class="td er" style="left:668px;width:25px"></div><div class="td c" style="left:693px;width:25px"></div><div class="td c" style="left:718px;width:25px"></div><div class="td r" style="left:743px;width:55px">1,728.89</div><div class="td r" style="left:798px;width:55px">432.22</div><div class="td r" style="left:853px;width:65px">1,728.89</div><div class="td r" style="left:918px;width:55px">0.00</div><div class="td c" style="left:973px;width:25px"></div><div class="td l" style="left:998px;width:60px">XML</div><div class="td l" style="left:1058px;width:75px"></div></div>
<div class="tr" style="top:15px"><div class="td l" style="left:0px;width:75px">Lake Buena<u>...</u></div><div class="td l" style="left:75px;width:120px">Wyndham Garden Di<u>...</u></div><div class="td l" style="left:195px;width:40px">3 St<u>...</u></div><div class="td l" style="left:235px;width:75px">Room Only</div><div class="td l" style="left:310px;width:90px">Double Standard</div><div class="td l" style="left:400px;width:35px">Tue</div><div class="td d" style="left:435px;width:68px">11/07/2017</div><div class="td l" style="left:503px;width:35px">Tue</div><div class="td d" style="left:538px;width:68px">08/08/2017</div><div class="td l" style="left:606px;width:62px">Hotelbeds</div><div class="td er" style="left:668px;width:25px"></div><div class="td c" style="left:693px;width:25px"></div><div class="td c" style="left:718px;width:25px"></div><div class="td r" style="left:743px;width:55px">1,847.95</div><div class="td r" style="left:798px;width:55px">461.99</div><div class="td r" style="left:853px;width:65px">1,847.95</div><div class="td r" style="left:918px;width:55px">0.00</div><div class="td c" style="left:973px;width:25px"></div><div class="td l" style="left:998px;width:60px">XML</div><div class="td l" style="left:1058px;width:75px"></div></div>
<div class="tr" style="top:30px"><div class="td l" style="left:0px;width:75px">Lake Buena<u>...</u></div><div class="td l" style="left:75px;width:120px">Wyndham Garden La<u>...</u></div><div class="td l" style="left:195px;width:40px">3.5</div><div class="td l" style="left:235px;width:75px">Room Only</div><div class="td l" style="left:310px;width:90px">Courtyard Dou<u>...</u></div><div class="td l" style="left:400px;width:35px">Tue</div><div class="td d" style="left:435px;width:68px">11/07/2017</div><div class="td l" style="left:503px;width:35px">Tue</div><div class="td d" style="left:538px;width:68px">08/08/2017</div><div class="td l" style="left:606px;width:62px">Ocean B<u>...</u></div><div class="td er" style="left:668px;width:25px"></div><div class="td c" style="left:693px;width:25px"></div><div class="td c" style="left:718px;width:25px"></div><div class="td r" style="left:743px;width:55px">1,899.69</div><div class="td r" style="left:798px;width:55px">474.92</div><div class="td r" style="left:853px;width:65px">1,899.69</div><div class="td r" style="left:918px;width:55px">0.00</div><div class="td c" style="left:973px;width:25px"></div><div class="td l" style="left:998px;width:60px">XML</div><div class="td l" style="left:1058px;width:75px"></div></div>
<div class="tr" style="top:45px"><div class="td l" style="left:0px;width:75px">*Kissimmee*</div><div class="td l" style="left:75px;width:120px">Wyndham Garden La<u>...</u></div><div class="td l" style="left:195px;width:40px">3.5*</div><div class="td l" style="left:235px;width:75px">Roomonly</div><div class="td l" style="left:310px;width:90px">Standard</div><div class="td l" style="left:400px;width:35px">Tue</div><div class="td d" style="left:435px;width:68px">11/07/2017</div><div class="td l" style="left:503px;width:35px">Tue</div><div class="td d" style="left:538px;width:68px">08/08/2017</div><div class="td l" style="left:606px;width:62px">Tourico <u>...</u></div><div class="td er" style="left:668px;width:25px">*</div><div class="td c" style="left:693px;width:25px"></div><div class="td c" style="left:718px;width:25px"></div><div class="td r" style="left:743px;width:55px">1,915.96</div><div class="td r" style="left:798px;width:55px">478.99</div><div class="td r" style="left:853px;width:65px">1,915.96</div><div class="td r" style="left:918px;width:55px">0.00</div><div class="td c" style="left:973px;width:25px"></div><div class="td l" style="left:998px;width:60px">XML</div><div class="td l" style="left:1058px;width:75px"></div></div>
<div class="tr" style="top:60px"><div class="td l" style="left:0px;width:75px">Lake Buena<u>...</u></div><div class="td l" style="left:75px;width:120px">Wyndham Garden La<u>...</u></div><div class="td l" style="left:195px;width:40px">3.5</div><div class="td l" style="left:235px;width:75px">Room Only</div><div class="td l" style="left:310px;width:90px">Standard Doub<u>...</u></div><div class="td l" style="left:400px;width:35px">Tue</div><div class="td d" style="left:435px;width:68px">11/07/2017</div><div class="td l" style="left:503px;width:35px">Tue</div><div class="td d" style="left:538px;width:68px">08/08/2017</div><div class="td l" style="left:606px;width:62px">Ocean B<u>...</u></div><div class="td er" style="left:668px;width:25px"></div><div class="td c" style="left:693px;width:25px"></div><div class="td c" style="left:718px;width:25px"></div><div class="td r" style="left:743px;width:55px">1,920.98</div><div class="td r" style="left:798px;width:55px">480.25</div><div class="td r" style="left:853px;width:65px">1,920.98</div><div class="td r" style="left:918px;width:55px">0.00</div><div class="td c" style="left:973px;width:25px"></div><div class="td l" style="left:998px;width:60px">XML</div><div class="td l" style="left:1058px;width:75px"></div></div>
<div class="tr" style="top:75px"><div class="td l" style="left:0px;width:75px">*Kissimmee*</div><div class="td l" style="left:75px;width:120px">Wyndham Garden La<u>...</u></div><div class="td l" style="left:195px;width:40px">3.5*</div><div class="td l" style="left:235px;width:75px">Roomonly</div><div class="td l" style="left:310px;width:90px">Standard, Cou<u>...</u></div><div class="td l" style="left:400px;width:35px">Tue</div><div class="td d" style="left:435px;width:68px">11/07/2017</div><div class="td l" style="left:503px;width:35px">Tue</div><div class="td d" style="left:538px;width:68px">08/08/2017</div><div class="td l" style="left:606px;width:62px">Tourico <u>...</u></div><div class="td er" style="left:668px;width:25px">*</div><div class="td c" style="left:693px;width:25px"></div><div class="td c" style="left:718px;width:25px"></div><div class="td r" style="left:743px;width:55px">2,090.91</div><div class="td r" style="left:798px;width:55px">522.73</div><div class="td r" style="left:853px;width:65px">2,090.91</div><div class="td r" style="left:918px;width:55px">0.00</div><div class="td c" style="left:973px;width:25px"></div><div class="td l" style="left:998px;width:60px">XML</div><div class="td l" style="left:1058px;width:75px"></div></div>
<div class="tr" style="top:90px"><div class="td l" style="left:0px;width:75px">Lake Buena<u>...</u></div><div class="td l" style="left:75px;width:120px">Wyndham Garden La<u>...</u></div><div class="td l" style="left:195px;width:40px">3.5</div><div class="td l" style="left:235px;width:75px">Room Only</div><div class="td l" style="left:310px;width:90px">Courtyard Dou<u>...</u></div><div class="td l" style="left:400px;width:35px">Tue</div><div class="td d" style="left:435px;width:68px">11/07/2017</div><div class="td l" style="left:503px;width:35px">Tue</div><div class="td d" style="left:538px;width:68px">08/08/2017</div><div class="td l" style="left:606px;width:62px">Ocean B<u>...</u></div><div class="td er" style="left:668px;width:25px"></div><div class="td c" style="left:693px;width:25px"></div><div class="td c" style="left:718px;width:25px"></div><div class="td r" style="left:743px;width:55px">2,110.76</div><div class="td r" style="left:798px;width:55px">527.69</div><div class="td r" style="left:853px;width:65px">2,110.76</div><div class="td r" style="left:918px;width:55px">0.00</div><div class="td c" style="left:973px;width:25px"></div><div class="td l" style="left:998px;width:60px">XML</div><div class="td l" style="left:1058px;width:75px"></div></div>
<div class="tr" style="top:105px"><div class="td l" style="left:0px;width:75px">*Kissimmee*</div><div class="td l" style="left:75px;width:120px">Wyndham Garden La<u>...</u></div><div class="td l" style="left:195px;width:40px">3.5*</div><div class="td l" style="left:235px;width:75px">Roomonly</div><div class="td l" style="left:310px;width:90px">Standard, Leis<u>...</u></div><div class="td l" style="left:400px;width:35px">Tue</div><div class="td d" style="left:435px;width:68px">11/07/2017</div><div class="td l" style="left:503px;width:35px">Tue</div><div class="td d" style="left:538px;width:68px">08/08/2017</div><div class="td l" style="left:606px;width:62px">Tourico <u>...</u></div><div class="td er" style="left:668px;width:25px">*</div><div class="td c" style="left:693px;width:25px"></div><div class="td c" style="left:718px;width:25px"></div><div class="td r" style="left:743px;width:55px">2,390.13</div><div class="td r" style="left:798px;width:55px">597.53</div><div class="td r" style="left:853px;width:65px">2,390.13</div><div class="td r" style="left:918px;width:55px">0.00</div><div class="td c" style="left:973px;width:25px"></div><div class="td l" style="left:998px;width:60px">XML</div><div class="td l" style="left:1058px;width:75px"></div></div>
<div class="tr" style="top:120px"><div class="td l" style="left:0px;width:75px">Lake Buena<u>...</u></div><div class="td l" style="left:75px;width:120px">Holiday Inn Orlando-<u>...</u></div><div class="td l" style="left:195px;width:40px">4 Stars</div><div class="td l" style="left:235px;width:75px">Room Only</div><div class="td l" style="left:310px;width:90px">Double Guest <u>...</u></div><div class="td l" style="left:400px;width:35px">Tue</div><div class="td d" style="left:435px;width:68px">11/07/2017</div><div class="td l" style="left:503px;width:35px">Tue</div><div class="td d" style="left:538px;width:68px">08/08/2017</div><div class="td l" style="left:606px;width:62px">Hotelbeds</div><div class="td er" style="left:668px;width:25px"></div><div class="td c" style="left:693px;width:25px"></div><div class="td c" style="left:718px;width:25px"></div><div class="td r" style="left:743px;width:55px">2,592.03</div><div class="td r" style="left:798px;width:55px">648.01</div><div class="td r" style="left:853px;width:65px">2,592.03</div><div class="td r" style="left:918px;width:55px">0.00</div><div class="td c" style="left:973px;width:25px"></div><div class="td l" style="left:998px;width:60px">XML</div><div class="td l" style="left:1058px;width:75px"></div></div>
<div class="tr" style="top:135px"><div class="td l" style="left:0px;width:75px">Lake Buena<u>...</u></div><div class="td l" style="left:75px;width:120px">Holiday Inn Walt Disn<u>...</u></div><div class="td l" style="left:195px;width:40px">3.0</div><div class="td l" style="left:235px;width:75px">Room Only</div><div class="td l" style="left:310px;width:90px">Double Guest <u>...</u></div><div class="td l" style="left:400px;width:35px">Tue</div><div class="td d" style="left:435px;width:68px">11/07/2017</div><div class="td l" style="left:503px;width:35px">Tue</div><div class="td d" style="left:538px;width:68px">08/08/2017</div><div class="td l" style="left:606px;width:62px">Get A Bed</div><div class="td er" style="left:668px;width:25px"></div><div class="td c" style="left:693px;width:25px"></div><div class="td c" style="left:718px;width:25px"></div><div class="td r" style="left:743px;width:55px">2,858.03</div><div class="td r" style="left:798px;width:55px">714.51</div><div class="td r" style="left:853px;width:65px">2,858.03</div><div class="td r" style="left:918px;width:55px">0.00</div><div class="td c" style="left:973px;width:25px"></div><div class="td l" style="left:998px;width:60px">XML</div><div class="td l" style="left:1058px;width:75px"></div></div>
<div class="tr sel" style="top:150px"><div class="td l" style="left:0px;width:75px">Orlando Ar<u>...</u></div><div class="td l" style="left:75px;width:120px">Disney Area Executiv<u>...</u></div><div class="td l" style="left:195px;width:40px">Exe<u>...</u></div><div class="td l" style="left:235px;width:75px">Room Only</div><div class="td l" style="left:310px;width:90px">4 Bedroom Exe<u>...</u></div><div class="td l" style="left:400px;width:35px">Tue</div><div class="td d" style="left:435px;width:68px">11/07/2017</div><div class="td l" style="left:503px;width:35px">Tue</div><div class="td d" style="left:538px;width:68px">08/08/2017</div><div class="td l" style="left:606px;width:62px">Ocean B<u>...</u></div><div class="td er" style="left:668px;width:25px">*</div><div class="td c" style="left:693px;width:25px"></div><div class="td c" style="left:718px;width:25px"></div><div class="td r" style="left:743px;width:55px">3,075.41</div><div class="td r" style="left:798px;width:55px">768.85</div><div class="td r" style="left:853px;width:65px">3,075.41</div><div class="td r" style="left:918px;width:55px">0.00</div><div class="td c" style="left:973px;width:25px"></div><div class="td l" style="left:998px;width:60px">XML</div><div class="td l" style="left:1058px;width:75px"></div></div>
<div class="tr" style="top:165px"><div class="td l" style="left:0px;width:75px">Orlando Pri<u>...</u></div><div class="td l" style="left:75px;width:120px">Disney Area Executiv<u>...</u></div><div class="td l" style="left:195px;width:40px">3.0</div><div class="td l" style="left:235px;width:75px">Self Catering</div><div class="td l" style="left:310px;width:90px">4 Bedroom Exe<u>...</u></div><div class="td l" style="left:400px;width:35px">Tue</div><div class="td d" style="left:435px;width:68px">11/07/2017</div><div class="td l" style="left:503px;width:35px">Tue</div><div class="td d" style="left:538px;width:68px">08/08/2017</div><div class="td l" style="left:606px;width:62px">Get A Bed</div><div class="td er" style="left:668px;width:25px">*</div><div class="td c" style="left:693px;width:25px"></div><div class="td c" style="left:718px;width:25px"></div><div class="td r" style="left:743px;width:55px">3,142.44</div><div class="td r" style="left:798px;width:55px">785.61</div><div class="td r" style="left:853px;width:65px">3,142.44</div><div class="td r" style="left:918px;width:55px">0.00</div><div class="td c" style="left:973px;width:25px"></div><div class="td l" style="left:998px;width:60px">XML</div><div class="td l" style="left:1058px;width:75px"></div></div>
<div class="tr" style="top:180px"><div class="td l" style="left:0px;width:75px">Orlando Ar<u>...</u></div><div class="td l" style="left:75px;width:120px">Disney Area Executiv<u>...</u></div><div class="td l" style="left:195px;width:40px">Exe<u>...</u></div><div class="td l" style="left:235px;width:75px">Room Only</div><div class="td l" style="left:310px;width:90px">5 Bedroom Exe<u>...</u></div><div class="td l" style="left:400px;width:35px">Tue</div><div class="td d" style="left:435px;width:68px">11/07/2017</div><div class="td l" style="left:503px;width:35px">Tue</div><div class="td d" style="left:538px;width:68px">08/08/2017</div><div class="td l" style="left:606px;width:62px">Ocean B<u>...</u></div><div class="td er" style="left:668px;width:25px">*</div><div class="td c" style="left:693px;width:25px"></div><div class="td c" style="left:718px;width:25px"></div><div class="td r" style="left:743px;width:55px">3,304.92</div><div class="td r" style="left:798px;width:55px">826.23</div><div class="td r" style="left:853px;width:65px">3,304.92</div><div class="td r" style="left:918px;width:55px">0.00</div><div class="td c" style="left:973px;width:25px"></div><div class="td l" style="left:998px;width:60px">XML</div><div class="td l" style="left:1058px;width:75px"></div></div>
<div class="tr" style="top:195px"><div class="td l" style="left:0px;width:75px">Orlando Ar<u>...</u></div><div class="td l" style="left:75px;width:120px">Disney Area Executiv<u>...</u></div><div class="td l" style="left:195px;width:40px">Exe<u>...</u></div><div class="td l" style="left:235px;width:75px">Room Only</div><div class="td l" style="left:310px;width:90px">4 Bedroom Exe<u>...</u></div><div class="td l" style="left:400px;width:35px">Tue</div><div class="td d" style="left:435px;width:68px">11/07/2017</div><div class="td l" style="left:503px;width:35px">Tue</div><div class="td d" style="left:538px;width:68px">08/08/2017</div><div class="td l" style="left:606px;width:62px">Ocean B<u>...</u></div><div class="td er" style="left:668px;width:25px">*</div><div class="td c" style="left:693px;width:25px"></div><div class="td c" style="left:718px;width:25px"></div><div class="td r" style="left:743px;width:55px">3,327.87</div><div class="td r" style="left:798px;width:55px">831.97</div><div class="td r" style="left:853px;width:65px">3,327.87</div><div class="td r" style="left:918px;width:55px">0.00</div><div class="td c" style="left:973px;width:25px"></div><div class="td l" style="left:998px;width:60px">XML</div><div class="td l" style="left:1058px;width:75px"></div></div>
<div class="tr" style="top:210px"><div class="td l" style="left:0px;width:75px">Orlando Pri<u>...</u></div><div class="td l" style="left:75px;width:120px">Disney Area Executiv<u>...</u></div><div class="td l" style="left:195px;width:40px">3.0</div><div class="td l" style="left:235px;width:75px">Self Catering</div><div class="td l" style="left:310px;width:90px">5 Bedroom Exe<u>...</u></div><div class="td l" style="left:400px;width:35px">Tue</div><div class="td d" style="left:435px;width:68px">11/07/2017</div><div class="td l" style="left:503px;width:35px">Tue</div><div class="td d" style="left:538px;width:68px">08/08/2017</div><div class="td l" style="left:606px;width:62px">Get A Bed</div><div class="td er" style="left:668px;width:25px">*</div><div class="td c" style="left:693px;width:25px"></div><div class="td c" style="left:718px;width:25px"></div><div class="td r" style="left:743px;width:55px">3,376.95</div><div class="td r" style="left:798px;width:55px">844.24</div><div class="td r" style="left:853px;width:65px">3,376.95</div><div class="td r" style="left:918px;width:55px">0.00</div><div class="td c" style="left:973px;width:25px"></div><div class="td l" style="left:998px;width:60px">XML</div><div class="td l" style="left:1058px;width:75px"></div></div>
<div class="tr" style="top:225px"><div class="td l" style="left:0px;width:75px">Orlando Pri<u>...</u></div><div class="td l" style="left:75px;width:120px">Disney Area Executiv<u>...</u></div><div class="td l" style="left:195px;width:40px">4.0</div><div class="td l" style="left:235px;width:75px">Self Catering</div><div class="td l" style="left:310px;width:90px">4 Bedroom Exe<u>...</u></div><div class="td l" style="left:400px;width:35px">Tue</div><div class="td d" style="left:435px;width:68px">11/07/2017</div><div class="td l" style="left:503px;width:35px">Tue</div><div class="td d" style="left:538px;width:68px">08/08/2017</div><div class="td l" style="left:606px;width:62px">Get A Bed</div><div class="td er" style="left:668px;width:25px">*</div><div class="td c" style="left:693px;width:25px"></div><div class="td c" style="left:718px;width:25px"></div><div class="td r" style="left:743px;width:55px">3,400.40</div><div class="td r" style="left:798px;width:55px">850.10</div><div class="td r" style="left:853px;width:65px">3,400.40</div><div class="td r" style="left:918px;width:55px">0.00</div><div class="td c" style="left:973px;width:25px"></div><div class="td l" style="left:998px;width:60px">XML</div><div class="td l" style="left:1058px;width:75px"></div></div>
<div class="tr" style="top:240px"><div class="td l" style="left:0px;width:75px">Kissimmee</div><div class="td l" style="left:75px;width:120px">Disney Area Executive</div><div class="td l" style="left:195px;width:40px">3.7</div><div class="td l" style="left:235px;width:75px">Roomonly</div><div class="td l" style="left:310px;width:90px">Villa, 4 Bedroo<u>...</u></div><div class="td l" style="left:400px;width:35px">Tue</div><div class="td d" style="left:435px;width:68px">11/07/2017</div><div class="td l" style="left:503px;width:35px">Tue</div><div class="td d" style="left:538px;width:68px">08/08/2017</div><div class="td l" style="left:606px;width:62px">Tourico <u>...</u></div><div class="td er" style="left:668px;width:25px"></div><div class="td c" style="left:693px;width:25px"></div><div class="td c" style="left:718px;width:25px"></div><div class="td r" style="left:743px;width:55px">3,420.76</div><div class="td r" style="left:798px;width:55px">855.19</div><div class="td r" style="left:853px;width:65px">3,420.76</div><div class="td r" style="left:918px;width:55px">0.00</div><div class="td c" style="left:973px;width:25px"></div><div class="td l" style="left:998px;width:60px">XML</div><div class="td l" style="left:1058px;width:75px"></div></div>
<div class="tr" style="top:255px"><div class="td l" style="left:0px;width:75px">Orlando Ar<u>...</u></div><div class="td l" style="left:75px;width:120px">Disney Area Executiv<u>...</u></div><div class="td l" style="left:195px;width:40px">Exe<u>...</u></div><div class="td l" style="left:235px;width:75px">Room Only</div><div class="td l" style="left:310px;width:90px">5 Bedroom Exe<u>...</u></div><div class="td l" style="left:400px;width:35px">Tue</div><div class="td d" style="left:435px;width:68px">11/07/2017</div><div class="td l" style="left:503px;width:35px">Tue</div><div class="td d" style="left:538px;width:68px">08/08/2017</div><div class="td l" style="left:606px;width:62px">Ocean B<u>...</u></div><div class="td er" style="left:668px;width:25px">*</div><div class="td c" style="left:693px;width:25px"></div><div class="td c" style="left:718px;width:25px"></div><div class="td r" style="left:743px;width:55px">3,580.33</div><div class="td r" style="left:798px;width:55px">895.08</div><div class="td r" style="left:853px;width:65px">3,580.33</div><div class="td r" style="left:918px;width:55px">0.00</div><div class="td c" style="left:973px;width:25px"></div><div class="td l" style="left:998px;width:60px">XML</div><div class="td l" style="left:1058px;width:75px"></div></div>
<div class="tr" style="top:270px"><div class="td l" style="left:0px;width:75px">Orlando Pri<u>...</u></div><div class="td l" style="left:75px;width:120px">Disney Area Executiv<u>...</u></div><div class="td l" style="left:195px;width:40px">4.0</div><div class="td l" style="left:235px;width:75px">Self Catering</div><div class="td l" style="left:310px;width:90px">5 Bedroom Exe<u>...</u></div><div class="td l" style="left:400px;width:35px">Tue</div><div class="td d" style="left:435px;width:68px">11/07/2017</div><div class="td l" style="left:503px;width:35px">Tue</div><div class="td d" style="left:538px;width:68px">08/08/2017</div><div class="td l" style="left:606px;width:62px">Get A Bed</div><div class="td er" style="left:668px;width:25px">*</div><div class="td c" style="left:693px;width:25px"></div><div class="td c" style="left:718px;width:25px"></div><div class="td r" style="left:743px;width:55px">3,658.36</div><div class="td r" style="left:798px;width:55px">914.59</div><div class="td r" style="left:853px;width:65px">3,658.36</div><div class="td r" style="left:918px;width:55px">0.00</div><div class="td c" style="left:973px;width:25px"></div><div class="td l" style="left:998px;width:60px">XML</div><div class="td l" style="left:1058px;width:75px"></div></div>
<div class="tr" style="top:285px"><div class="td l" style="left:0px;width:75px">Kissimmee</div><div class="td l" style="left:75px;width:120px">Disney Area Executive</div><div class="td l" style="left:195px;width:40px">3.7</div><div class="td l" style="left:235px;width:75px">Roomonly</div><div class="td l" style="left:310px;width:90px">Standard, 5 Be<u>...</u></div><div class="td l" style="left:400px;width:35px">Tue</div><div class="td d" style="left:435px;width:68px">11/07/2017</div><div class="td l" style="left:503px;width:35px">Tue</div><div class="td d" style="left:538px;width:68px">08/08/2017</div><div class="td l" style="left:606px;width:62px">Tourico <u>...</u></div><div class="td er" style="left:668px;width:25px"></div><div class="td c" style="left:693px;width:25px"></div><div class="td c" style="left:718px;width:25px"></div><div class="td r" style="left:743px;width:55px">3,665.12</div><div class="td r" style="left:798px;width:55px">916.28</div><div class="td r" style="left:853px;width:65px">3,665.12</div><div class="td r" style="left:918px;width:55px">0.00</div><div class="td c" style="left:973px;width:25px"></div><div class="td l" style="left:998px;width:60px">XML</div><div class="td l" style="left:1058px;width:75px"></div></div>
<div class="tr" style="top:300px"><div class="td l" style="left:0px;width:75px">Lake Buena<u>...</u></div><div class="td l" style="left:75px;width:120px">Doubletree Guest Sui<u>...</u></div><div class="td l" style="left:195px;width:40px">3.0</div><div class="td l" style="left:235px;width:75px">Room Only</div><div class="td l" style="left:310px;width:90px">Suite Queen Q<u>...</u></div><div class="td l" style="left:400px;width:35px">Tue</div><div class="td d" style="left:435px;width:68px">11/07/2017</div><div class="td l" style="left:503px;width:35px">Tue</div><div class="td d" style="left:538px;width:68px">08/08/2017</div><div class="td l" style="left:606px;width:62px">Get A Bed</div><div class="td er" style="left:668px;width:25px"></div><div class="td c" style="left:693px;width:25px"></div><div class="td c" style="left:718px;width:25px"></div><div class="td r" style="left:743px;width:55px">3,898.51</div><div class="td r" style="left:798px;width:55px">974.63</div><div class="td r" style="left:853px;width:65px">3,898.51</div><div class="td r" style="left:918px;width:55px">0.00</div><div class="td c" style="left:973px;width:25px"></div><div class="td l" style="left:998px;width:60px">XML</div><div class="td l" style="left:1058px;width:75px"></div></div>
<div class="tr" style="top:315px"><div class="td l" style="left:0px;width:75px">*Kissimmee*</div><div class="td l" style="left:75px;width:120px">Doubletree Guest Sui<u>...</u></div><div class="td l" style="left:195px;width:40px">3*</div><div class="td l" style="left:235px;width:75px">Roomonly</div><div class="td l" style="left:310px;width:90px">Standard</div><div class="td l" style="left:400px;width:35px">Tue</div><div class="td d" style="left:435px;width:68px">11/07/2017</div><div class="td l" style="left:503px;width:35px">Tue</div><div class="td d" style="left:538px;width:68px">08/08/2017</div><div class="td l" style="left:606px;width:62px">Tourico <u>...</u></div><div class="td er" style="left:668px;width:25px"></div><div class="td c" style="left:693px;width:25px"></div><div class="td c" style="left:718px;width:25px"></div><div class="td r" style="left:743px;width:55px">4,407.19</div><div class="td r" style="left:798px;width:55px">1,101.80</div><div class="td r" style="left:853px;width:65px">4,407.19</div><div class="td r" style="left:918px;width:55px">0.00</div><div class="td c" style="left:973px;width:25px"></div><div class="td l" style="left:998px;width:60px">XML</div><div class="td l" style="left:1058px;width:75px"></div></div>
<div class="tr" style="top:330px"><div class="td l" style="left:0px;width:75px">Lake Buena<u>...</u></div><div class="td l" style="left:75px;width:120px">Doubletree Guest Sui<u>...</u></div><div class="td l" style="left:195px;width:40px">3.0</div><div class="td l" style="left:235px;width:75px">Continental<u>...</u></div><div class="td l" style="left:310px;width:90px">Suite Queen Q<u>...</u></div><div class="td l" style="left:400px;width:35px">Tue</div><div class="td d" style="left:435px;width:68px">11/07/2017</div><div class="td l" style="left:503px;width:35px">Tue</div><div class="td d" style="left:538px;width:68px">08/08/2017</div><div class="td l" style="left:606px;width:62px">Get A Bed</div><div class="td er" style="left:668px;width:25px"></div><div class="td c" style="left:693px;width:25px"></div><div class="td c" style="left:718px;width:25px"></div><div class="td r" style="left:743px;width:55px">4,443.30</div><div class="td r" style="left:798px;width:55px">1,110.83</div><div class="td r" style="left:853px;width:65px">4,443.30</div><div class="td r" style="left:918px;width:55px">0.00</div><div class="td c" style="left:973px;width:25px"></div><div class="td l" style="left:998px;width:60px">XML</div><div class="td l" style="left:1058px;width:75px"></div></div>
<div class="tr" style="top:345px"><div class="td l" style="left:0px;width:75px">Lake Buena<u>...</u></div><div class="td l" style="left:75px;width:120px">Doubletree Guest Sui<u>...</u></div><div class="td l" style="left:195px;width:40px">4 St<u>...</u></div><div class="td l" style="left:235px;width:75px">Room Only</div><div class="td l" style="left:310px;width:90px">Suite Run Of H<u>...</u></div><div class="td l" style="left:400px;width:35px">Tue</div><div class="td d" style="left:435px;width:68px">11/07/2017</div><div class="td l" style="left:503px;width:35px">Tue</div><div class="td d" style="left:538px;width:68px">08/08/2017</div><div class="td l" style="left:606px;width:62px">Hotelbeds</div><div class="td er" style="left:668px;width:25px"></div><div class="td c" style="left:693px;width:25px"></div><div class="td c" style="left:718px;width:25px"></div><div class="td r" style="left:743px;width:55px">4,620.08</div><div class="td r" style="left:798px;width:55px">1,155.02</div><div class="td r" style="left:853px;width:65px">4,620.08</div><div class="td r" style="left:918px;width:55px">0.00</div><div class="td c" style="left:973px;width:25px"></div><div class="td l" style="left:998px;width:60px">XML</div><div class="td l" style="left:1058px;width:75px"></div></div>
<div class="tr" style="top:360px"><div class="td l" style="left:0px;width:75px">Clermont (FL)</div><div class="td l" style="left:75px;width:120px">Disney Area Premium</div><div class="td l" style="left:195px;width:40px">3.7</div><div class="td l" style="left:235px;width:75px">Roomonly</div><div class="td l" style="left:310px;width:90px">Villa, 4 Bedroo<u>...</u></div><div class="td l" style="left:400px;width:35px">Tue</div><div class="td d" style="left:435px;width:68px">11/07/2017</div><div class="td l" style="left:503px;width:35px">Tue</div><div class="td d" style="left:538px;width:68px">08/08/2017</div><div class="td l" style="left:606px;width:62px">Tourico <u>...</u></div><div class="td er" style="left:668px;width:25px">*</div><div class="td c" style="left:693px;width:25px"></div><div class="td c" style="left:718px;width:25px"></div><div class="td r" style="left:743px;width:55px">4,693.15</div><div class="td r" style="left:798px;width:55px">1,173.29</div><div class="td r" style="left:853px;width:65px">4,693.15</div><div class="td r" style="left:918px;width:55px">0.00</div><div class="td c" style="left:973px;width:25px"></div><div class="td l" style="left:998px;width:60px">XML</div><div class="td l" style="left:1058px;width:75px"></div></div>
<div class="tr" style="top:375px"><div class="td l" style="left:0px;width:75px">*Kissimmee*</div><div class="td l" style="left:75px;width:120px">Disney All Star Movie<u>...</u></div><div class="td l" style="left:195px;width:40px">3.0</div><div class="td l" style="left:235px;width:75px">Room Only</div><div class="td l" style="left:310px;width:90px">Preferred Room</div><div class="td l" style="left:400px;width:35px">Tue</div><div class="td d" style="left:435px;width:68px">11/07/2017</div><div class="td l" style="left:503px;width:35px">Tue</div><div class="td d" style="left:538px;width:68px">08/08/2017</div><div class="td l" style="left:606px;width:62px">Get A Bed</div><div class="td er" style="left:668px;width:25px"></div><div class="td c" style="left:693px;width:25px"></div><div class="td c" style="left:718px;width:25px"></div><div class="td r" style="left:743px;width:55px">4,817.23</div><div class="td r" style="left:798px;width:55px">1,204.31</div><div class="td r" style="left:853px;width:65px">4,817.23</div><div class="td r" style="left:918px;width:55px">0.00</div><div class="td c" style="left:973px;width:25px"></div><div class="td l" style="left:998px;width:60px">XML</div><div class="td l" style="left:1058px;width:75px"></div></div>
<div class="tr" style="top:390px"><div class="td l" style="left:0px;width:75px">Orlando Ar<u>...</u></div><div class="td l" style="left:75px;width:120px">Disney Area Platinum<u>...</u></div><div class="td l" style="left:195px;width:40px">Plati<u>...</u></div><div class="td l" style="left:235px;width:75px">Room Only</div><div class="td l" style="left:310px;width:90px">4 Bedroom Plat<u>...</u></div><div class="td l" style="left:400px;width:35px">Tue</div><div class="td d" style="left:435px;width:68px">11/07/2017</div><div class="td l" style="left:503px;width:35px">Tue</div><div class="td d" style="left:538px;width:68px">08/08/2017</div><div class="td l" style="left:606px;width:62px">Ocean B<u>...</u></div><div class="td er" style="left:668px;width:25px">*</div><div class="td c" style="left:693px;width:25px"></div><div class="td c" style="left:718px;width:25px"></div><div class="td r" style="left:743px;width:55px">4,911.48</div><div class="td r" style="left:798px;width:55px">1,227.87</div><div class="td r" style="left:853px;width:65px">4,911.48</div><div class="td r" style="left:918px;width:55px">0.00</div><div class="td c" style="left:973px;width:25px"></div><div class="td l" style="left:998px;width:60px">XML</div><div class="td l" style="left:1058px;width:75px"></div></div>
<div class="tr" style="top:405px"><div class="td l" style="left:0px;width:75px">Orlando Pri<u>...</u></div><div class="td l" style="left:75px;width:120px">Disney Area Platinum<u>...</u></div><div class="td l" style="left:195px;width:40px">4.5</div><div class="td l" style="left:235px;width:75px">Self Catering</div><div class="td l" style="left:310px;width:90px">4 Bedroom Villa<u>...</u></div><div class="td l" style="left:400px;width:35px">Tue</div><div class="td d" style="left:435px;width:68px">11/07/2017</div><div class="td l" style="left:503px;width:35px">Tue</div><div class="td d" style="left:538px;width:68px">08/08/2017</div><div class="td l" style="left:606px;width:62px">Get A Bed</div><div class="td er" style="left:668px;width:25px">*</div><div class="td c" style="left:693px;width:25px"></div><div class="td c" style="left:718px;width:25px"></div><div class="td r" style="left:743px;width:55px">5,018.53</div><div class="td r" style="left:798px;width:55px">1,254.63</div><div class="td r" style="left:853px;width:65px">5,018.53</div><div class="td r" style="left:918px;width:55px">0.00</div><div class="td c" style="left:973px;width:25px"></div><div class="td l" style="left:998px;width:60px">XML</div><div class="td l" style="left:1058px;width:75px"></div></div>
<div class="tr" style="top:420px"><div class="td l" style="left:0px;width:75px">*Kissimmee*</div><div class="td l" style="left:75px;width:120px">Waldorf Astoria Orla<u>...</u></div><div class="td l" style="left:195px;width:40px">5 Stars</div><div class="td l" style="left:235px;width:75px">Room Only</div><div class="td l" style="left:310px;width:90px">Quadruple Dis<u>...</u></div><div class="td l" style="left:400px;width:35px">Tue</div><div class="td d" style="left:435px;width:68px">11/07/2017</div><div class="td l" style="left:503px;width:35px">Tue</div><div class="td d" style="left:538px;width:68px">08/08/2017</div><div class="td l" style="left:606px;width:62px">Hotelbeds</div><div class="td er" style="left:668px;width:25px"></div><div class="td c" style="left:693px;width:25px"></div><div class="td c" style="left:718px;width:25px"></div><div class="td r" style="left:743px;width:55px">5,139.48</div><div class="td r" style="left:798px;width:55px">1,284.87</div><div class="td r" style="left:853px;width:65px">5,139.48</div><div class="td r" style="left:918px;width:55px">0.00</div><div class="td c" style="left:973px;width:25px"></div><div class="td l" style="left:998px;width:60px">XML</div><div class="td l" style="left:1058px;width:75px"></div></div>
<div class="tr" style="top:435px"><div class="td l" style="left:0px;width:75px">Orlando Ar<u>...</u></div><div class="td l" style="left:75px;width:120px">Disney Area Platinum<u>...</u></div><div class="td l" style="left:195px;width:40px">Plati<u>...</u></div><div class="td l" style="left:235px;width:75px">Room Only</div><div class="td l" style="left:310px;width:90px">5 Bedroom Plat<u>...</u></div><div class="td l" style="left:400px;width:35px">Tue</div><div class="td d" style="left:435px;width:68px">11/07/2017</div><div class="td l" style="left:503px;width:35px">Tue</div><div class="td d" style="left:538px;width:68px">08/08/2017</div><div class="td l" style="left:606px;width:62px">Ocean B<u>...</u></div><div class="td er" style="left:668px;width:25px">*</div><div class="td c" style="left:693px;width:25px"></div><div class="td c" style="left:718px;width:25px"></div><div class="td r" style="left:743px;width:55px">5,186.89</div><div class="td r" style="left:798px;width:55px">1,296.72</div><div class="td r" style="left:853px;width:65px">5,186.89</div><div class="td r" style="left:918px;width:55px">0.00</div><div class="td c" style="left:973px;width:25px"></div><div class="td l" style="left:998px;width:60px">XML</div><div class="td l" style="left:1058px;width:75px"></div></div>
<div class="tr" style="top:450px"><div class="td l" style="left:0px;width:75px">Orlando Pri<u>...</u></div><div class="td l" style="left:75px;width:120px">Disney Area Platinum<u>...</u></div><div class="td l" style="left:195px;width:40px">4.5</div><div class="td l" style="left:235px;width:75px">Self Catering</div><div class="td l" style="left:310px;width:90px">5 Bedroom Villa<u>...</u></div><div class="td l" style="left:400px;width:35px">Tue</div><div class="td d" style="left:435px;width:68px">11/07/2017</div><div class="td l" style="left:503px;width:35px">Tue</div><div class="td d" style="left:538px;width:68px">08/08/2017</div><div class="td l" style="left:606px;width:62px">Get A Bed</div><div class="td er" style="left:668px;width:25px">*</div><div class="td c" style="left:693px;width:25px"></div><div class="td c" style="left:718px;width:25px"></div><div class="td r" style="left:743px;width:55px">5,299.94</div><div class="td r" style="left:798px;width:55px">1,324.99</div><div class="td r" style="left:853px;width:65px">5,299.94</div><div class="td r" style="left:918px;width:55px">0.00</div><div class="td c" style="left:973px;width:25px"></div><div class="td l" style="left:998px;width:60px">XML</div><div class="td l" style="left:1058px;width:75px"></div></div>
<div class="tr" style="top:465px"><div class="td l" style="left:0px;width:75px">Kissimmee</div><div class="td l" style="left:75px;width:120px">Disney Area Platinum<u>...</u></div><div class="td l" style="left:195px;width:40px">3.7</div><div class="td l" style="left:235px;width:75px">Roomonly</div><div class="td l" style="left:310px;width:90px">Standard, 4 Be<u>...</u></div><div class="td l" style="left:400px;width:35px">Tue</div><div class="td d" style="left:435px;width:68px">11/07/2017</div><div class="td l" style="left:503px;width:35px">Tue</div><div class="td d" style="left:538px;width:68px">08/08/2017</div><div class="td l" style="left:606px;width:62px">Tourico <u>...</u></div><div class="td er" style="left:668px;width:25px"></div><div class="td c" style="left:693px;width:25px"></div><div class="td c" style="left:718px;width:25px"></div><div class="td r" style="left:743px;width:55px">5,429.12</div><div class="td r" style="left:798px;width:55px">1,357.28</div><div class="td r" style="left:853px;width:65px">5,429.12</div><div class="td r" style="left:918px;width:55px">0.00</div><div class="td c" style="left:973px;width:25px"></div><div class="td l" style="left:998px;width:60px">XML</div><div class="td l" style="left:1058px;width:75px"></div></div>
<div class="tr" style="top:480px"><div class="td l" style="left:0px;width:75px">Kissimmee</div><div class="td l" style="left:75px;width:120px">Disney Area Platinum<u>...</u></div><div class="td l" style="left:195px;width:40px">3.7</div><div class="td l" style="left:235px;width:75px">Roomonly</div><div class="td l" style="left:310px;width:90px">Standard, 5 Be<u>...</u></div><div class="td l" style="left:400px;width:35px">Tue</div><div class="td d" style="left:435px;width:68px">11/07/2017</div><div class="td l" style="left:503px;width:35px">Tue</div><div class="td d" style="left:538px;width:68px">08/08/2017</div><div class="td l" style="left:606px;width:62px">Tourico <u>...</u></div><div class="td er" style="left:668px;width:25px"></div><div class="td c" style="left:693px;width:25px"></div><div class="td c" style="left:718px;width:25px"></div><div class="td r" style="left:743px;width:55px">5,726.01</div><div class="td r" style="left:798px;width:55px">1,431.50</div><div class="td r" style="left:853px;width:65px">5,726.01</div><div class="td r" style="left:918px;width:55px">0.00</div><div class="td c" style="left:973px;width:25px"></div><div class="td l" style="left:998px;width:60px">XML</div><div class="td l" style="left:1058px;width:75px"></div></div>
<div class="tr" style="top:495px"><div class="td l" style="left:0px;width:75px">*Kissimmee*</div><div class="td l" style="left:75px;width:120px">Waldorf Astoria Orla<u>...</u></div><div class="td l" style="left:195px;width:40px">5 Stars</div><div class="td l" style="left:235px;width:75px">Room Only</div><div class="td l" style="left:310px;width:90px">Suite Deluxe</div><div class="td l" style="left:400px;width:35px">Tue</div><div class="td d" style="left:435px;width:68px">11/07/2017</div><div class="td l" style="left:503px;width:35px">Tue</div><div class="td d" style="left:538px;width:68px">08/08/2017</div><div class="td l" style="left:606px;width:62px">Hotelbeds</div><div class="td er" style="left:668px;width:25px"></div><div class="td c" style="left:693px;width:25px"></div><div class="td c" style="left:718px;width:25px"></div><div class="td r" style="left:743px;width:55px">5,928.09</div><div class="td r" style="left:798px;width:55px">1,482.02</div><div class="td r" style="left:853px;width:65px">5,928.09</div><div class="td r" style="left:918px;width:55px">0.00</div><div class="td c" style="left:973px;width:25px"></div><div class="td l" style="left:998px;width:60px">XML</div><div class="td l" style="left:1058px;width:75px"></div></div>
<div class="tr" style="top:510px"><div class="td l" style="left:0px;width:75px">*Kissimmee*</div><div class="td l" style="left:75px;width:120px">Disney's Caribbean B<u>...</u></div><div class="td l" style="left:195px;width:40px">3.0</div><div class="td l" style="left:235px;width:75px">Room Only</div><div class="td l" style="left:310px;width:90px">Pirate Room St<u>...</u></div><div class="td l" style="left:400px;width:35px">Tue</div><div class="td d" style="left:435px;width:68px">11/07/2017</div><div class="td l" style="left:503px;width:35px">Tue</div><div class="td d" style="left:538px;width:68px">08/08/2017</div><div class="td l" style="left:606px;width:62px">Get A Bed</div><div class="td er" style="left:668px;width:25px"></div><div class="td c" style="left:693px;width:25px"></div><div class="td c" style="left:718px;width:25px"></div><div class="td r" style="left:743px;width:55px">8,135.00</div><div class="td r" style="left:798px;width:55px">2,033.75</div><div class="td r" style="left:853px;width:65px">8,135.00</div><div class="td r" style="left:918px;width:55px">0.00</div><div class="td c" style="left:973px;width:25px"></div><div class="td l" style="left:998px;width:60px">XML</div><div class="td l" style="left:1058px;width:75px"></div></div>
<div class="tr" style="top:525px"><div class="td l" style="left:0px;width:75px">Orlando (FL)</div><div class="td l" style="left:75px;width:120px">Disney's Art of Anima<u>...</u></div><div class="td l" style="left:195px;width:40px">3star</div><div class="td l" style="left:235px;width:75px">Room Only</div><div class="td l" style="left:310px;width:90px">Cars Family Sui<u>...</u></div><div class="td l" style="left:400px;width:35px">Tue</div><div class="td d" style="left:435px;width:68px">11/07/2017</div><div class="td l" style="left:503px;width:35px">Tue</div><div class="td d" style="left:538px;width:68px">08/08/2017</div><div class="td l" style="left:606px;width:62px">Bonotel</div><div class="td er" style="left:668px;width:25px"></div><div class="td c" style="left:693px;width:25px"></div><div class="td c" style="left:718px;width:25px"></div><div class="td r" style="left:743px;width:55px">9,356.88</div><div class="td r" style="left:798px;width:55px">2,339.22</div><div class="td r" style="left:853px;width:65px">9,356.88</div><div class="td r" style="left:918px;width:55px">0.00</div><div class="td c" style="left:973px;width:25px"></div><div class="td l" style="left:998px;width:60px">XML</div><div class="td l" style="left:1058px;width:75px"></div></div>
<div class="tr" style="top:540px"><div class="td l" style="left:0px;width:75px">*Kissimmee*</div><div class="td l" style="left:75px;width:120px">Disney's Art of Anima<u>...</u></div><div class="td l" style="left:195px;width:40px">3 St<u>...</u></div><div class="td l" style="left:235px;width:75px">Room Only</div><div class="td l" style="left:310px;width:90px">Suite Standard</div><div class="td l" style="left:400px;width:35px">Tue</div><div class="td d" style="left:435px;width:68px">11/07/2017</div><div class="td l" style="left:503px;width:35px">Tue</div><div class="td d" style="left:538px;width:68px">08/08/2017</div><div class="td l" style="left:606px;width:62px">Hotelbeds</div><div class="td er" style="left:668px;width:25px"></div><div class="td c" style="left:693px;width:25px"></div><div class="td c" style="left:718px;width:25px"></div><div class="td r" style="left:743px;width:55px">9,736.36</div><div class="td r" style="left:798px;width:55px">2,434.09</div><div class="td r" style="left:853px;width:65px">9,736.36</div><div class="td r" style="left:918px;width:55px">0.00</div><div class="td c" style="left:973px;width:25px"></div><div class="td l" style="left:998px;width:60px">XML</div><div class="td l" style="left:1058px;width:75px"></div></div>
<div class="tr" style="top:555px"><div class="td l" style="left:0px;width:75px">Orlando (FL)</div><div class="td l" style="left:75px;width:120px">Disney's Art of Anima<u>...</u></div><div class="td l" style="left:195px;width:40px">3star</div><div class="td l" style="left:235px;width:75px">Room Only</div><div class="td l" style="left:310px;width:90px">Finding Nemo <u>...</u></div><div class="td l" style="left:400px;width:35px">Tue</div><div class="td d" style="left:435px;width:68px">11/07/2017</div><div class="td l" style="left:503px;width:35px">Tue</div><div class="td d" style="left:538px;width:68px">08/08/2017</div><div class="td l" style="left:606px;width:62px">Bonotel</div><div class="td er" style="left:668px;width:25px"></div><div class="td c" style="left:693px;width:25px"></div><div class="td c" style="left:718px;width:25px"></div><div class="td r" style="left:743px;width:55px">10,082<u>...</u></div><div class="td r" style="left:798px;width:55px">2,520.73</div><div class="td r" style="left:853px;width:65px">10,082.93</div><div class="td r" style="left:918px;width:55px">0.00</div><div class="td c" style="left:973px;width:25px"></div><div class="td l" style="left:998px;width:60px">XML</div><div class="td l" style="left:1058px;width:75px"></div></div>
<div class="tr" style="top:570px"><div class="td l" style="left:0px;width:75px">*Kissimmee*</div><div class="td l" style="left:75px;width:120px">Disney's Art of Anima<u>...</u></div><div class="td l" style="left:195px;width:40px">3.0</div><div class="td l" style="left:235px;width:75px">Room Only</div><div class="td l" style="left:310px;width:90px">Cars Family Suite</div><div class="td l" style="left:400px;width:35px">Tue</div><div class="td d" style="left:435px;width:68px">11/07/2017</div><div class="td l" style="left:503px;width:35px">Tue</div><div class="td d" style="left:538px;width:68px">08/08/2017</div><div class="td l" style="left:606px;width:62px">Get A Bed</div><div class="td er" style="left:668px;width:25px"></div><div class="td c" style="left:693px;width:25px"></div><div class="td c" style="left:718px;width:25px"></div><div class="td r" style="left:743px;width:55px">10,698<u>...</u></div><div class="td r" style="left:798px;width:55px">2,674.71</div><div class="td r" style="left:853px;width:65px">10,698.84</div><div class="td r" style="left:918px;width:55px">0.00</div><div class="td c" style="left:973px;width:25px"></div><div class="td l" style="left:998px;width:60px">XML</div><div class="td l" style="left:1058px;width:75px"></div></div>
</div>
</div>
<div id="vs">
<div class="sbtn" style="top:0"><svg style="left:3px;top:5px" width="7" height="4" viewBox="0 0 7 4"><path d="M0 4h7l-3.500-4z" fill="#000"/></svg></div>
<div class="sbtn" style="top:16px;height:531px"></div>
<div class="sbtn" style="top:587px"><svg style="left:3px;top:6px" width="7" height="4" viewBox="0 0 7 4"><path d="M0 0h7l-3.500 4z" fill="#000"/></svg></div>
</div>
</div>
<span id="fp">First portion: 7.0 sec, total search time: 20.8 sec</span>
<div id="ibtn"><b>i</b></div>
<div id="btabs"><span class="bt" style="left:2px;width:51px;">Summary</span><span class="bt" style="left:53px;width:41px;">Search</span><span class="bt" style="left:94px;width:92px;background:#c6ffc6;">Acc 4A MCO; 29n</span><span class="bt" style="left:186px;width:76px;background:#c6ffc6;">Car MCO; 30d</span><span class="bt" style="left:262px;width:46px;background:#c6ffc6;">Tour 4A</span><span class="bt" style="left:308px;width:91px;background:#000084;color:#fff;">Acc 4A MCO; 28n</span><span class="bt" style="left:399px;width:77px;background:#c6c3ff;">Car MCO; 29d</span><span class="bt" style="left:476px;width:45px;background:#c6c3ff;">Tour 4A</span><span class="bt" style="left:521px;width:96px;">Financial Summary</span></div>
</div>
<div id="status"><span style="left:781px">User: 481 - Harika Parmar</span><span style="left:916px">Retailer: 'Ocean-Florida'</span><span style="left:1042px">Client: none</span><span style="left:1539px">17:56 GMT</span></div>
<div id="tbline"></div>
<div id="start" style="left:2px;top:860px;width:52px;height:38px;background:#d6d3ce;border:1px solid;border-color:#fff #424142 #424142 #fff;box-shadow:inset -1px -1px 0 #848284"><svg style="left:2px;top:9px" width="16" height="15" viewBox="0 0 16 16"><path d="M1 3c2-1.500 4-1.500 6 0l-1 5c-2-1.500-4-1.500-6 0z" fill="#e8502a"/><path d="M8 3.500c2 1.500 4 1.500 6 0l-1 5c-2 1.500-4 1.500-6 0z" fill="#6ac030"/><path d="M0 9c2-1.500 4-1.500 6 0l-1 5c-2-1.500-4-1.500-6 0z" fill="#3a80e0"/><path d="M7 9.500c2 1.500 4 1.500 6 0l-1 5c-2 1.500-4 1.500-6 0z" fill="#f0c020"/></svg><b style="left:19px;top:12px;font-size:11px;line-height:13px;letter-spacing:.55px;-webkit-text-stroke:.25px #000">Start</b><i style="left:18px;top:2px;width:30px;height:33px;border:1px dotted #000"></i></div>
<div id="task" style="left:63px;top:860px;width:159px;height:38px;background:#fff;border:1px solid;border-color:#424142 #fff #fff #424142;box-shadow:inset 1px 1px 0 #848284"><svg style="left:5px;top:7px" width="30" height="24" viewBox="0 0 30 26"><path d="M1 5l9-3 18 4-9 12-7 5-7-8z" fill="#e07a10"/><path d="M1 5l9-3 18 4-15 5z" fill="#f8cc50"/><path d="M13 11l15-5-9 12-7 5z" fill="#b84a08"/></svg><b style="left:39px;top:12px;font-size:11px;line-height:13px;letter-spacing:.45px;-webkit-text-stroke:.25px #000">Interactive - Ocea...</b></div>
<div id="tray" style="left:1408px;top:860px;width:191px;height:38px;border:1px solid;border-color:#848284 #fff #fff #848284"><span style="left:106px;top:4px;width:60px;text-align:center">17:56</span><span style="left:97px;top:20px;width:78px;text-align:center">13/06/2017</span><svg style="left:7px;top:10px" width="16" height="16" viewBox="0 0 16 16"><path d="M1 2h7v6h-7z" fill="#e8a020"/><path d="M8 2h7v6h-7z" fill="#e83020"/><path d="M1 8h7v6h-7z" fill="#30a8e0"/><path d="M8 8h7v6h-7z" fill="#40a030"/><path d="M4 1l9 14" stroke="#333" stroke-width="1"/></svg><svg style="left:30px;top:11px" width="17" height="12" viewBox="0 0 17 12"><rect x="0" y="3" width="13" height="7" fill="#30c030" stroke="#106010"/><path d="M2 10v2M5 10v2M8 10v2M11 10v2" stroke="#c0a020"/><path d="M14 2v8M14 3h2M14 6h2" stroke="#333"/></svg><svg style="left:54px;top:10px" width="16" height="16" viewBox="0 0 16 16"><rect x="5" y="3" width="10" height="9" fill="#e8e8e8" stroke="#606060"/><rect x="1" y="1" width="6" height="8" fill="#d0d0d0" stroke="#606060"/><path d="M3 9v5h4" stroke="#606060" fill="none"/></svg><svg style="left:77px;top:10px" width="17" height="16" viewBox="0 0 17 16"><path d="M1 5h3l4-4v13l-4-4h-3z" fill="#e8e8e8" stroke="#707070"/><circle cx="12" cy="11" r="4" fill="#e82020"/><path d="M10 9l4 4M14 9l-4 4" stroke="#fff" stroke-width="1.300"/></svg><svg style="left:171px;top:12px" width="15" height="13" viewBox="0 0 16 14"><rect x="0" y="0" width="16" height="11" fill="#3a78d8" stroke="#18408a"/><rect x="1" y="7" width="14" height="3" fill="#2050a8"/><rect x="3" y="12" width="10" height="2" fill="#a0a8b0"/></svg></div>
</div>
</body></html>
